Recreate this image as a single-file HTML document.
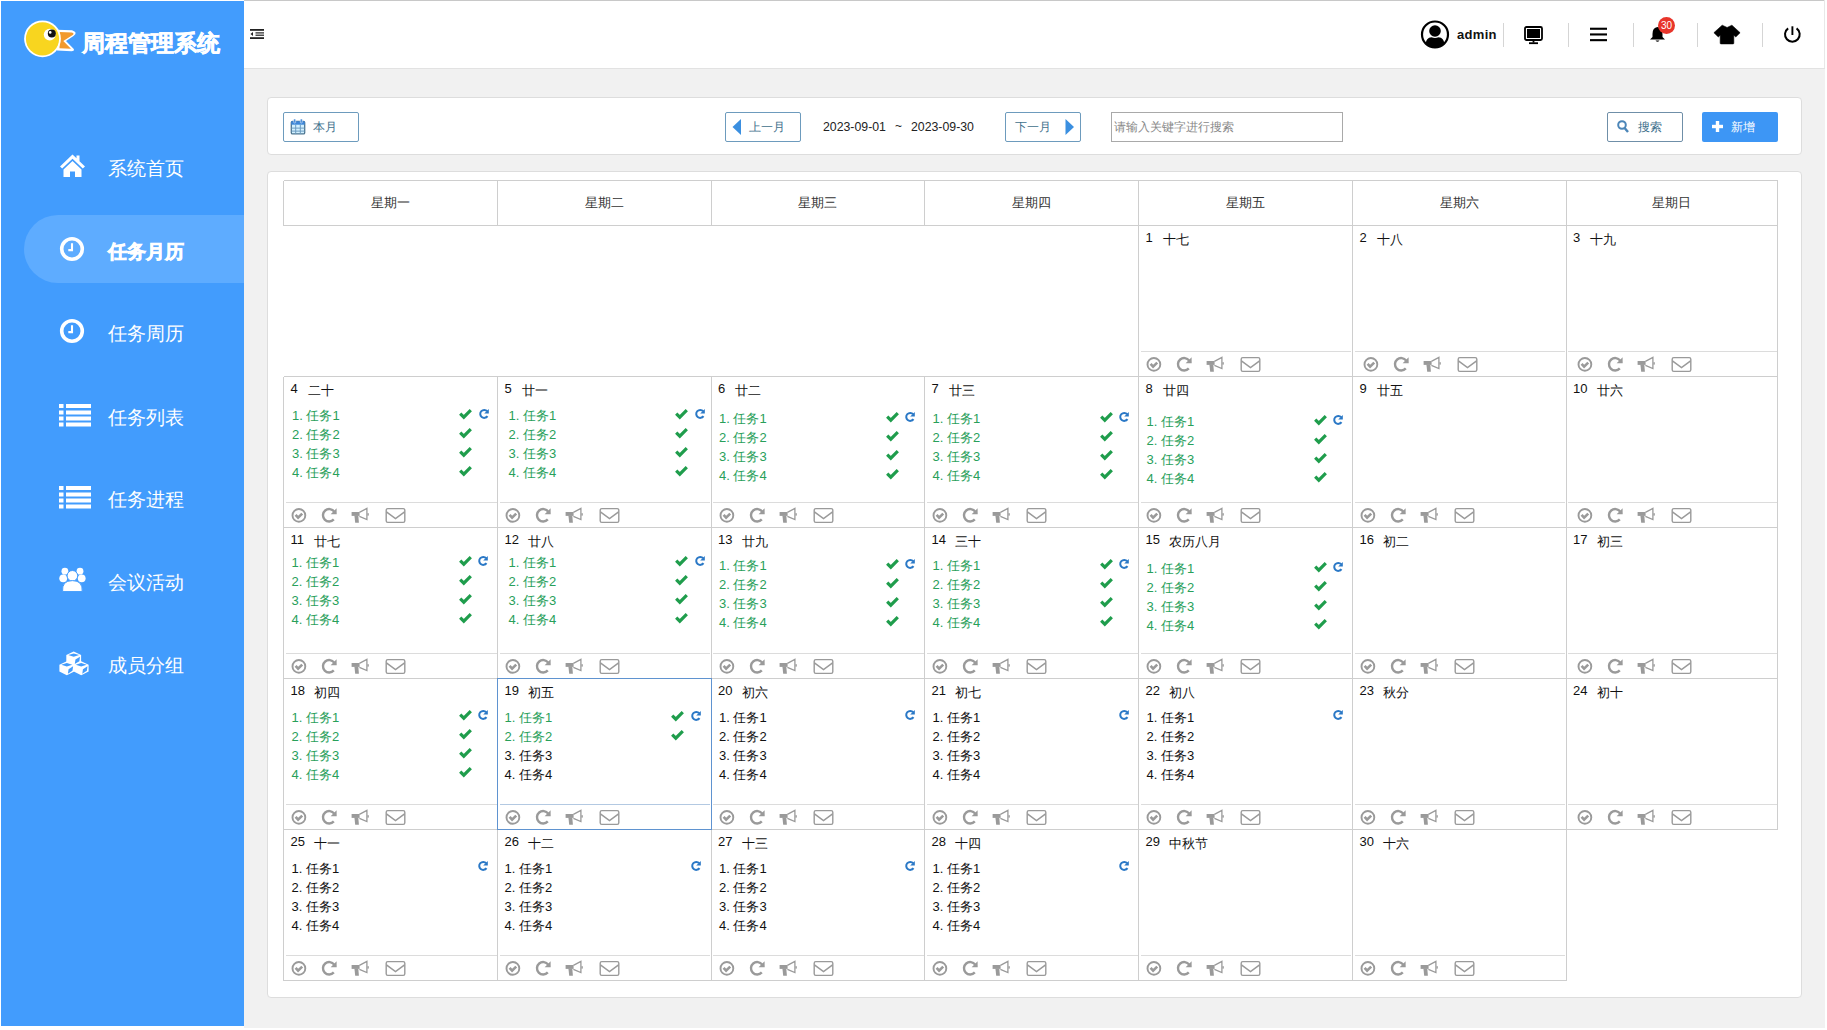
<!DOCTYPE html>
<html><head><meta charset="utf-8"><title>周程管理系统</title><style>
*{box-sizing:border-box;margin:0;padding:0}
html,body{width:1827px;height:1030px;overflow:hidden;background:#fff;font-family:"Liberation Sans", sans-serif}
.a{position:absolute}
.ln{position:absolute}
.t{position:absolute;white-space:nowrap}
svg{position:absolute;overflow:visible}
</style></head>
<body>
<div class="a" style="left:244px;top:0;width:1580px;height:1px;background:#c8c8c8"></div>
<div class="a" style="left:1px;top:1px;width:243px;height:1025px;background:#429cfd"></div>
<div class="a" style="left:244px;top:1px;width:1581px;height:68px;background:#fff;border-bottom:1px solid #e2e2e2"></div>
<div class="a" style="left:1824px;top:0;width:1px;height:68px;background:#e8e8e8"></div>
<div class="a" style="left:244px;top:69px;width:1581px;height:959px;background:#f1f1f1"></div>
<svg style="left:20px;top:16px" width="60" height="46" viewBox="0 0 60 46">
<path d="M37 13.8 L52 14.3 Q58.5 16.5 53.5 20 L46 25 L53.8 33 Q54.5 35.2 51.5 35.2 L37 34.5 Z" fill="#fff"/>
<path d="M39.5 16 L51.8 16.5 Q55 17.6 52.3 19.3 L43.3 25 L51 32.8 L39.5 32.3 Z" fill="#f29a2e"/>
<circle cx="22.5" cy="22.8" r="18.4" fill="#fff"/>
<circle cx="22.5" cy="22.8" r="16.6" fill="#f8d51f"/>
<circle cx="29.7" cy="18.6" r="5.9" fill="#fff"/>
<circle cx="31.8" cy="17.5" r="4" fill="#111"/>
<circle cx="30.2" cy="16.4" r="1.3" fill="#fff"/>
</svg>
<div class="t" style="left:82px;top:28px;font-size:23px;line-height:30px;font-weight:bold;color:#fff;letter-spacing:0px;-webkit-text-stroke:0.6px #fff">周程管理系统</div>
<div class="a" style="left:24px;top:215px;width:220px;height:68px;background:#5eacff;border-radius:34px 0 0 34px"></div>
<div class="t" style="left:108px;top:156.3px;font-size:19px;line-height:26px;color:#fff;font-weight:normal">系统首页</div>
<svg style="left:59px;top:153.3px" width="27" height="25" viewBox="0 0 27 25">
<path d="M13.5 1.5 L1 13.5 L3.2 15.6 L13.5 5.8 L23.8 15.6 L26 13.5 L20.5 8.2 L20.5 2.5 L17.5 2.5 L17.5 5.3 Z" fill="#fff"/>
<path d="M13.5 8 L4.5 16.5 L4.5 24 L11 24 L11 18.5 L16 18.5 L16 24 L22.5 24 L22.5 16.5 Z" fill="#fff"/>
</svg>
<div class="t" style="left:108px;top:239.3px;font-size:19px;line-height:26px;color:#fff;font-weight:bold;-webkit-text-stroke:0.7px #fff">任务月历</div>
<svg style="left:60px;top:237.3px" width="24" height="24" viewBox="0 0 24 24">
<circle cx="12" cy="12" r="10.3" fill="none" stroke="#fff" stroke-width="3.6"/>
<path d="M12 6.3 V13.1 H8.3" fill="none" stroke="#fff" stroke-width="2.1"/>
</svg>
<div class="t" style="left:108px;top:321.3px;font-size:19px;line-height:26px;color:#fff;font-weight:normal">任务周历</div>
<svg style="left:60px;top:319.3px" width="24" height="24" viewBox="0 0 24 24">
<circle cx="12" cy="12" r="10.3" fill="none" stroke="#fff" stroke-width="3.6"/>
<path d="M12 6.3 V13.1 H8.3" fill="none" stroke="#fff" stroke-width="2.1"/>
</svg>
<div class="t" style="left:108px;top:404.5px;font-size:19px;line-height:26px;color:#fff;font-weight:normal">任务列表</div>
<svg style="left:59px;top:402.5px" width="32" height="24" viewBox="0 0 32 24">
<g fill="#fff"><rect x="0" y="1" width="4.5" height="4"/><rect x="0" y="7.5" width="4.5" height="4"/><rect x="0" y="13.5" width="4.5" height="4"/><rect x="0" y="19.5" width="4.5" height="4"/>
<rect x="7" y="1" width="25" height="4"/><rect x="7" y="7.5" width="25" height="4"/><rect x="7" y="13.5" width="25" height="4"/><rect x="7" y="19.5" width="25" height="4"/></g>
</svg>
<div class="t" style="left:108px;top:486.5px;font-size:19px;line-height:26px;color:#fff;font-weight:normal">任务进程</div>
<svg style="left:59px;top:484.5px" width="32" height="24" viewBox="0 0 32 24">
<g fill="#fff"><rect x="0" y="1" width="4.5" height="4"/><rect x="0" y="7.5" width="4.5" height="4"/><rect x="0" y="13.5" width="4.5" height="4"/><rect x="0" y="19.5" width="4.5" height="4"/>
<rect x="7" y="1" width="25" height="4"/><rect x="7" y="7.5" width="25" height="4"/><rect x="7" y="13.5" width="25" height="4"/><rect x="7" y="19.5" width="25" height="4"/></g>
</svg>
<div class="t" style="left:108px;top:569.5px;font-size:19px;line-height:26px;color:#fff;font-weight:normal">会议活动</div>
<svg style="left:0;top:0" width="100" height="700" viewBox="0 0 100 700">
<g fill="#fff"><circle cx="64.9" cy="571.2" r="3.4"/><circle cx="80.0" cy="571.2" r="3.4"/>
<circle cx="63.2" cy="578.3" r="3.9"/><circle cx="81.7" cy="578.3" r="3.9"/></g>
<circle cx="72.4" cy="575.8" r="5.3" fill="#fff" stroke="#429cfd" stroke-width="1"/>
<path d="M62.6 591.6 Q61.6 580.6 72.4 580.6 Q83 580.6 82.2 591.6 Z" fill="#fff" stroke="#429cfd" stroke-width="1"/>
</svg>
<div class="t" style="left:108px;top:653px;font-size:19px;line-height:26px;color:#fff;font-weight:normal">成员分组</div>
<svg style="left:0;top:0" width="100" height="700" viewBox="0 0 100 700"><polygon points="73.70,651.50 81.10,655.10 81.10,661.90 73.70,665.50 66.30,661.90 66.30,655.10" fill="#fff"/><polygon points="73.70,653.40 79.20,655.10 73.70,656.80 68.20,655.10" fill="#429cfd"/><polygon points="75.44,659.45 80.00,656.65 79.36,661.15 74.80,663.95" fill="#429cfd"/><polygon points="66.80,661.20 74.20,664.80 74.20,671.60 66.80,675.20 59.40,671.60 59.40,664.80" fill="#fff"/><polygon points="66.80,663.10 72.30,664.80 66.80,666.50 61.30,664.80" fill="#429cfd"/><polygon points="68.54,669.15 73.10,666.35 72.46,670.85 67.90,673.65" fill="#429cfd"/><polygon points="81.20,661.20 88.60,664.80 88.60,671.60 81.20,675.20 73.80,671.60 73.80,664.80" fill="#fff"/><polygon points="81.20,663.10 86.70,664.80 81.20,666.50 75.70,664.80" fill="#429cfd"/><polygon points="82.94,669.15 87.50,666.35 86.86,670.85 82.30,673.65" fill="#429cfd"/></svg>
<svg style="left:250px;top:29px" width="14" height="10" viewBox="0 0 14 10">
<rect x="0" y="0" width="14" height="1.8" fill="#222"/><rect x="5.5" y="3.3" width="8.5" height="1.2" fill="#222"/><rect x="5.5" y="5.6" width="8.5" height="1.2" fill="#222"/>
<rect x="0" y="8.2" width="14" height="1.8" fill="#222"/><path d="M3 3 L0.5 5 L3 7 Z" fill="#222"/></svg>
<svg style="left:1421px;top:20px" width="28" height="29" viewBox="0 0 28 29">
<circle cx="14" cy="14.5" r="13" fill="none" stroke="#000" stroke-width="2.2"/>
<circle cx="14" cy="11" r="5.8" fill="#000"/>
<path d="M4.6 24 Q5 17.8 10.5 17.3 Q14 18.6 17.5 17.3 Q23 17.8 23.4 24 Q19 27.8 14 27.8 Q9 27.8 4.6 24Z" fill="#000"/>
</svg>
<div class="t" style="left:1457px;top:27px;font-size:13px;line-height:16px;font-weight:bold;color:#111;letter-spacing:0.3px">admin</div>
<div class="a" style="left:1503.0px;top:23px;width:1px;height:24px;background:#d5d5d5"></div>
<div class="a" style="left:1568.0px;top:23px;width:1px;height:24px;background:#d5d5d5"></div>
<div class="a" style="left:1633.0px;top:23px;width:1px;height:24px;background:#d5d5d5"></div>
<div class="a" style="left:1697.0px;top:23px;width:1px;height:24px;background:#d5d5d5"></div>
<div class="a" style="left:1762.0px;top:23px;width:1px;height:24px;background:#d5d5d5"></div>
<svg style="left:1524px;top:26px" width="20" height="19" viewBox="0 0 20 19">
<rect x="1" y="1" width="17" height="13" rx="1.5" fill="none" stroke="#000" stroke-width="1.8"/>
<rect x="3" y="3" width="13" height="9" fill="#000"/><rect x="8.6" y="14" width="1.8" height="2.6" fill="#000"/><rect x="5" y="16.3" width="9" height="1.8" fill="#000"/>
</svg>
<svg style="left:1590px;top:27px" width="17" height="15" viewBox="0 0 17 15">
<rect x="0" y="0.7" width="17" height="2.1" fill="#000"/><rect x="0" y="6.4" width="17" height="2.1" fill="#000"/><rect x="0" y="12.1" width="17" height="2.1" fill="#000"/></svg>
<svg style="left:1649px;top:26px" width="17" height="17" viewBox="0 0 17 17">
<path d="M8.5 1 Q13.5 1.5 13.5 8 L13.5 11 L16 13.5 L1 13.5 L3.5 11 L3.5 8 Q3.5 1.5 8.5 1Z" fill="#000"/>
<path d="M6.5 14.5 Q8.5 17 10.5 14.5Z" fill="#000"/></svg>
<div class="a" style="left:1658px;top:17px;width:17px;height:17px;border-radius:50%;background:#e8352b"></div>
<div class="t" style="left:1658px;top:19px;width:17px;text-align:center;font-size:10px;line-height:13px;color:#fff">30</div>
<svg style="left:1714px;top:25px" width="27" height="20" viewBox="0 0 27 20">
<path d="M8.2 0.2 L13.1 2.5 L17.9 0.2 L26.1 7.7 L21.8 11.9 L19.8 10.2 L19.8 18.2 Q19.8 18.9 19 18.9 L7 18.9 Q6.2 18.9 6.2 18.2 L6.2 10.2 L4.3 11.9 L-0.1 7.7 Z" fill="#000" stroke="#000" stroke-width="0.6" stroke-linejoin="round"/></svg>
<svg style="left:1783px;top:25px" width="19" height="19" viewBox="0 0 19 19">
<path d="M13.57 3.33 A7.35 7.35 0 1 1 5.13 3.33" fill="none" stroke="#000" stroke-width="2"/>
<rect x="8.45" y="1.3" width="1.9" height="8.7" fill="#000"/></svg>
<div class="a" style="left:267px;top:97px;width:1535px;height:58px;background:#fff;border:1px solid #dddddd;border-radius:4px"></div>
<div class="a" style="left:283px;top:112px;width:76px;height:30px;border:1px solid #6d9bbd;background:#fff;border-radius:2px"></div>
<svg style="left:290px;top:118px" width="16" height="17" viewBox="0 0 16 17">
<rect x="1.3" y="3.3" width="13.4" height="12.6" rx="1.2" fill="#d2f0ff" stroke="#4d7590" stroke-width="1.3"/>
<rect x="1.3" y="3.3" width="13.4" height="3.4" fill="#3d86d8"/>
<g fill="#6c9cc0"><rect x="5.2" y="6.7" width="1" height="9"/><rect x="9.8" y="6.7" width="1" height="9"/><rect x="1.5" y="9.6" width="13" height="1"/><rect x="1.5" y="12.6" width="13" height="1"/></g>
<rect x="3.7" y="1" width="2" height="4" rx="0.8" fill="#3d86d8" stroke="#fff" stroke-width="0.5"/><rect x="10.3" y="1" width="2" height="4" rx="0.8" fill="#3d86d8" stroke="#fff" stroke-width="0.5"/></svg>
<div class="t" style="left:313px;top:120px;font-size:12px;line-height:15px;color:#40708c">本月</div>
<div class="a" style="left:725px;top:112px;width:76px;height:30px;border:1px solid #6d9bbd;background:#fff;border-radius:2px"></div>
<svg style="left:732px;top:119px" width="10" height="16" viewBox="0 0 10 16"><path d="M9 0 L0.5 8 L9 16Z" fill="#3b8fe0"/></svg>
<div class="t" style="left:749px;top:120px;font-size:12px;line-height:15px;color:#40708c">上一月</div>
<div class="t" style="left:823px;top:120px;font-size:12.3px;line-height:15px;color:#222">2023-09-01</div>
<div class="t" style="left:895px;top:119px;font-size:12px;line-height:15px;color:#222">~</div>
<div class="t" style="left:911px;top:120px;font-size:12.3px;line-height:15px;color:#222">2023-09-30</div>
<div class="a" style="left:1005px;top:112px;width:76px;height:30px;border:1px solid #6d9bbd;background:#fff;border-radius:2px"></div>
<div class="t" style="left:1015px;top:120px;font-size:12px;line-height:15px;color:#40708c">下一月</div>
<svg style="left:1065px;top:119px" width="10" height="16" viewBox="0 0 10 16"><path d="M0.5 0 L9 8 L0.5 16Z" fill="#3b8fe0"/></svg>
<div class="a" style="left:1111px;top:112px;width:232px;height:30px;border:1px solid #a9a9a9;background:#fff"></div>
<div class="t" style="left:1114px;top:120px;font-size:12px;line-height:15px;color:#888">请输入关键字进行搜索</div>
<div class="a" style="left:1607px;top:112px;width:76px;height:30px;border:1px solid #6f8fa8;background:#fff;border-radius:2px"></div>
<svg style="left:1617px;top:120px" width="12" height="13" viewBox="0 0 12 13">
<circle cx="5" cy="5" r="3.8" fill="none" stroke="#4c86b8" stroke-width="2"/><path d="M7.6 8 L11 12" stroke="#4c86b8" stroke-width="2.4"/></svg>
<div class="t" style="left:1638px;top:120px;font-size:12px;line-height:15px;color:#40708c">搜索</div>
<div class="a" style="left:1702px;top:112px;width:76px;height:30px;background:#3d96f5;border-radius:2px"></div>
<svg style="left:1712px;top:121px" width="11" height="11" viewBox="0 0 11 11"><rect x="3.8" y="0" width="3.4" height="11" fill="#fff"/><rect x="0" y="3.8" width="11" height="3.4" fill="#fff"/></svg>
<div class="t" style="left:1731px;top:120px;font-size:12px;line-height:15px;color:#fff">新增</div>
<div class="a" style="left:267px;top:170.5px;width:1535px;height:827.5px;background:#fff;border:1px solid #dddddd;border-radius:4px"></div>
<div class="ln" style="left:283.5px;top:180.0px;width:1494.0px;height:1px;background:#cecece"></div>
<div class="ln" style="left:283.5px;top:225.0px;width:1494.0px;height:1px;background:#cecece"></div>
<div class="ln" style="left:283.0px;top:180.5px;width:1px;height:45.0px;background:#cecece"></div>
<div class="ln" style="left:497.0px;top:180.5px;width:1px;height:45.0px;background:#cecece"></div>
<div class="ln" style="left:710.5px;top:180.5px;width:1px;height:45.0px;background:#cecece"></div>
<div class="ln" style="left:924.0px;top:180.5px;width:1px;height:45.0px;background:#cecece"></div>
<div class="ln" style="left:1138.1px;top:180.5px;width:1px;height:45.0px;background:#cecece"></div>
<div class="ln" style="left:1352.0px;top:180.5px;width:1px;height:45.0px;background:#cecece"></div>
<div class="ln" style="left:1565.5px;top:180.5px;width:1px;height:45.0px;background:#cecece"></div>
<div class="ln" style="left:1777.0px;top:180.5px;width:1px;height:45.0px;background:#cecece"></div>
<div class="t" style="left:283.5px;top:195px;width:214.0px;text-align:center;font-size:13px;line-height:16px;color:#333">星期一</div>
<div class="t" style="left:497.5px;top:195px;width:213.5px;text-align:center;font-size:13px;line-height:16px;color:#333">星期二</div>
<div class="t" style="left:711.0px;top:195px;width:213.5px;text-align:center;font-size:13px;line-height:16px;color:#333">星期三</div>
<div class="t" style="left:924.5px;top:195px;width:214.1px;text-align:center;font-size:13px;line-height:16px;color:#333">星期四</div>
<div class="t" style="left:1138.6px;top:195px;width:213.9px;text-align:center;font-size:13px;line-height:16px;color:#333">星期五</div>
<div class="t" style="left:1352.5px;top:195px;width:213.5px;text-align:center;font-size:13px;line-height:16px;color:#333">星期六</div>
<div class="t" style="left:1566.0px;top:195px;width:211.5px;text-align:center;font-size:13px;line-height:16px;color:#333">星期日</div>
<div class="ln" style="left:1138.1px;top:225.5px;width:1px;height:151.0px;background:#cecece"></div>
<div class="ln" style="left:1352.0px;top:225.5px;width:1px;height:151.0px;background:#cecece"></div>
<div class="ln" style="left:1565.5px;top:225.5px;width:1px;height:151.0px;background:#cecece"></div>
<div class="ln" style="left:1777.0px;top:225.5px;width:1px;height:151.0px;background:#cecece"></div>
<div class="ln" style="left:283.0px;top:376.5px;width:1px;height:151.0px;background:#cecece"></div>
<div class="ln" style="left:497.0px;top:376.5px;width:1px;height:151.0px;background:#cecece"></div>
<div class="ln" style="left:710.5px;top:376.5px;width:1px;height:151.0px;background:#cecece"></div>
<div class="ln" style="left:924.0px;top:376.5px;width:1px;height:151.0px;background:#cecece"></div>
<div class="ln" style="left:1138.1px;top:376.5px;width:1px;height:151.0px;background:#cecece"></div>
<div class="ln" style="left:1352.0px;top:376.5px;width:1px;height:151.0px;background:#cecece"></div>
<div class="ln" style="left:1565.5px;top:376.5px;width:1px;height:151.0px;background:#cecece"></div>
<div class="ln" style="left:1777.0px;top:376.5px;width:1px;height:151.0px;background:#cecece"></div>
<div class="ln" style="left:283.0px;top:527.5px;width:1px;height:151.0px;background:#cecece"></div>
<div class="ln" style="left:497.0px;top:527.5px;width:1px;height:151.0px;background:#cecece"></div>
<div class="ln" style="left:710.5px;top:527.5px;width:1px;height:151.0px;background:#cecece"></div>
<div class="ln" style="left:924.0px;top:527.5px;width:1px;height:151.0px;background:#cecece"></div>
<div class="ln" style="left:1138.1px;top:527.5px;width:1px;height:151.0px;background:#cecece"></div>
<div class="ln" style="left:1352.0px;top:527.5px;width:1px;height:151.0px;background:#cecece"></div>
<div class="ln" style="left:1565.5px;top:527.5px;width:1px;height:151.0px;background:#cecece"></div>
<div class="ln" style="left:1777.0px;top:527.5px;width:1px;height:151.0px;background:#cecece"></div>
<div class="ln" style="left:283.0px;top:678.5px;width:1px;height:151.0px;background:#cecece"></div>
<div class="ln" style="left:497.0px;top:678.5px;width:1px;height:151.0px;background:#cecece"></div>
<div class="ln" style="left:710.5px;top:678.5px;width:1px;height:151.0px;background:#cecece"></div>
<div class="ln" style="left:924.0px;top:678.5px;width:1px;height:151.0px;background:#cecece"></div>
<div class="ln" style="left:1138.1px;top:678.5px;width:1px;height:151.0px;background:#cecece"></div>
<div class="ln" style="left:1352.0px;top:678.5px;width:1px;height:151.0px;background:#cecece"></div>
<div class="ln" style="left:1565.5px;top:678.5px;width:1px;height:151.0px;background:#cecece"></div>
<div class="ln" style="left:1777.0px;top:678.5px;width:1px;height:151.0px;background:#cecece"></div>
<div class="ln" style="left:283.0px;top:829.5px;width:1px;height:151.0px;background:#cecece"></div>
<div class="ln" style="left:497.0px;top:829.5px;width:1px;height:151.0px;background:#cecece"></div>
<div class="ln" style="left:710.5px;top:829.5px;width:1px;height:151.0px;background:#cecece"></div>
<div class="ln" style="left:924.0px;top:829.5px;width:1px;height:151.0px;background:#cecece"></div>
<div class="ln" style="left:1138.1px;top:829.5px;width:1px;height:151.0px;background:#cecece"></div>
<div class="ln" style="left:1352.0px;top:829.5px;width:1px;height:151.0px;background:#cecece"></div>
<div class="ln" style="left:1565.5px;top:829.5px;width:1px;height:151.0px;background:#cecece"></div>
<div class="ln" style="left:283.5px;top:376.0px;width:1494.0px;height:1px;background:#cecece"></div>
<div class="ln" style="left:283.5px;top:527.0px;width:1494.0px;height:1px;background:#cecece"></div>
<div class="ln" style="left:283.5px;top:678.0px;width:1494.0px;height:1px;background:#cecece"></div>
<div class="ln" style="left:283.5px;top:829.0px;width:1494.0px;height:1px;background:#cecece"></div>
<div class="ln" style="left:283.5px;top:980.0px;width:1282.5px;height:1px;background:#cecece"></div>
<div class="t" style="left:1145.6px;top:229.5px;font-size:13px;line-height:16px;color:#111">1</div>
<div class="t" style="left:1162.6px;top:231.5px;font-size:13px;line-height:16px;color:#111">十七</div>
<div class="ln" style="left:1140.6px;top:351.0px;width:210.9px;height:1px;background:#dcdcdc"></div>
<svg style="left:1147.1px;top:357.0px" width="116" height="16" viewBox="0 0 116 16">
<g fill="none" stroke="#9a9a9a">
<circle cx="6.9" cy="7.4" r="6.4" stroke-width="1.9"/>
<path d="M3.6 6.9 L6.1 9.7 L10.2 5.6" stroke-width="2.6"/>
<path d="M41.8 11.4 A6.2 6.2 0 1 1 42.2 3.6" stroke-width="2.4"/>
<rect x="94.2" y="0.6" width="18.6" height="13.8" rx="1.6" stroke-width="1.4"/>
<path d="M94.4 3.8 L103.5 10.6 L112.6 3.8" stroke-width="1.5"/>
</g>
<path d="M44.6 0.2 L44.7 6.2 L38.6 6.2 Z" fill="#9a9a9a"/>
<g fill="#9a9a9a"><path d="M59.6 4 L67.6 4 L67.6 7.9 L59.6 7.9 Z"/><path d="M62.4 7.5 L66.3 7.5 L66.9 14.7 L63.2 14.7 Z"/></g>
<path d="M67.4 4.4 L74.9 0.4 L74.9 11.6 L67.4 8.3" fill="#9a9a9a" fill-opacity="0" stroke="#9a9a9a" stroke-width="1.3"/>
<rect x="75.4" y="5.2" width="1.4" height="2.4" fill="#9a9a9a"/>
</svg>
<div class="t" style="left:1359.5px;top:229.5px;font-size:13px;line-height:16px;color:#111">2</div>
<div class="t" style="left:1376.5px;top:231.5px;font-size:13px;line-height:16px;color:#111">十八</div>
<div class="ln" style="left:1354.5px;top:351.0px;width:210.5px;height:1px;background:#dcdcdc"></div>
<svg style="left:1364.4px;top:357.0px" width="116" height="16" viewBox="0 0 116 16">
<g fill="none" stroke="#9a9a9a">
<circle cx="6.9" cy="7.4" r="6.4" stroke-width="1.9"/>
<path d="M3.6 6.9 L6.1 9.7 L10.2 5.6" stroke-width="2.6"/>
<path d="M41.8 11.4 A6.2 6.2 0 1 1 42.2 3.6" stroke-width="2.4"/>
<rect x="94.2" y="0.6" width="18.6" height="13.8" rx="1.6" stroke-width="1.4"/>
<path d="M94.4 3.8 L103.5 10.6 L112.6 3.8" stroke-width="1.5"/>
</g>
<path d="M44.6 0.2 L44.7 6.2 L38.6 6.2 Z" fill="#9a9a9a"/>
<g fill="#9a9a9a"><path d="M59.6 4 L67.6 4 L67.6 7.9 L59.6 7.9 Z"/><path d="M62.4 7.5 L66.3 7.5 L66.9 14.7 L63.2 14.7 Z"/></g>
<path d="M67.4 4.4 L74.9 0.4 L74.9 11.6 L67.4 8.3" fill="#9a9a9a" fill-opacity="0" stroke="#9a9a9a" stroke-width="1.3"/>
<rect x="75.4" y="5.2" width="1.4" height="2.4" fill="#9a9a9a"/>
</svg>
<div class="t" style="left:1573.0px;top:229.5px;font-size:13px;line-height:16px;color:#111">3</div>
<div class="t" style="left:1590.0px;top:231.5px;font-size:13px;line-height:16px;color:#111">十九</div>
<div class="ln" style="left:1568.0px;top:351.0px;width:208.5px;height:1px;background:#dcdcdc"></div>
<svg style="left:1577.9px;top:357.0px" width="116" height="16" viewBox="0 0 116 16">
<g fill="none" stroke="#9a9a9a">
<circle cx="6.9" cy="7.4" r="6.4" stroke-width="1.9"/>
<path d="M3.6 6.9 L6.1 9.7 L10.2 5.6" stroke-width="2.6"/>
<path d="M41.8 11.4 A6.2 6.2 0 1 1 42.2 3.6" stroke-width="2.4"/>
<rect x="94.2" y="0.6" width="18.6" height="13.8" rx="1.6" stroke-width="1.4"/>
<path d="M94.4 3.8 L103.5 10.6 L112.6 3.8" stroke-width="1.5"/>
</g>
<path d="M44.6 0.2 L44.7 6.2 L38.6 6.2 Z" fill="#9a9a9a"/>
<g fill="#9a9a9a"><path d="M59.6 4 L67.6 4 L67.6 7.9 L59.6 7.9 Z"/><path d="M62.4 7.5 L66.3 7.5 L66.9 14.7 L63.2 14.7 Z"/></g>
<path d="M67.4 4.4 L74.9 0.4 L74.9 11.6 L67.4 8.3" fill="#9a9a9a" fill-opacity="0" stroke="#9a9a9a" stroke-width="1.3"/>
<rect x="75.4" y="5.2" width="1.4" height="2.4" fill="#9a9a9a"/>
</svg>
<div class="t" style="left:290.5px;top:380.5px;font-size:13px;line-height:16px;color:#111">4</div>
<div class="t" style="left:307.5px;top:382.5px;font-size:13px;line-height:16px;color:#111">二十</div>
<div class="t" style="left:292.0px;top:408.0px;font-size:13px;line-height:16px;color:#28a05a">1.&nbsp;任务1</div>
<svg style="left:459.0px;top:408.5px" width="13" height="10" viewBox="0 0 13 10"><path d="M1.2 4.6 L4.8 8.2 L11.8 1.2" fill="none" stroke="#1f9d4c" stroke-width="3.2"/></svg>
<svg style="left:478.5px;top:408.5px" width="10" height="10" viewBox="0 0 10 10"><path d="M8.2 2.2 A4 4 0 1 0 8.5 7.2" fill="none" stroke="#2a78c6" stroke-width="2"/><path d="M9.8 0 L9.8 4.6 L5.2 4.6Z" fill="#2a78c6"/></svg>
<div class="t" style="left:292.0px;top:427.0px;font-size:13px;line-height:16px;color:#28a05a">2.&nbsp;任务2</div>
<svg style="left:459.0px;top:427.5px" width="13" height="10" viewBox="0 0 13 10"><path d="M1.2 4.6 L4.8 8.2 L11.8 1.2" fill="none" stroke="#1f9d4c" stroke-width="3.2"/></svg>
<div class="t" style="left:292.0px;top:446.0px;font-size:13px;line-height:16px;color:#28a05a">3.&nbsp;任务3</div>
<svg style="left:459.0px;top:446.5px" width="13" height="10" viewBox="0 0 13 10"><path d="M1.2 4.6 L4.8 8.2 L11.8 1.2" fill="none" stroke="#1f9d4c" stroke-width="3.2"/></svg>
<div class="t" style="left:292.0px;top:465.0px;font-size:13px;line-height:16px;color:#28a05a">4.&nbsp;任务4</div>
<svg style="left:459.0px;top:465.5px" width="13" height="10" viewBox="0 0 13 10"><path d="M1.2 4.6 L4.8 8.2 L11.8 1.2" fill="none" stroke="#1f9d4c" stroke-width="3.2"/></svg>
<div class="ln" style="left:285.5px;top:502.0px;width:211.0px;height:1px;background:#dcdcdc"></div>
<svg style="left:292.0px;top:508.0px" width="116" height="16" viewBox="0 0 116 16">
<g fill="none" stroke="#9a9a9a">
<circle cx="6.9" cy="7.4" r="6.4" stroke-width="1.9"/>
<path d="M3.6 6.9 L6.1 9.7 L10.2 5.6" stroke-width="2.6"/>
<path d="M41.8 11.4 A6.2 6.2 0 1 1 42.2 3.6" stroke-width="2.4"/>
<rect x="94.2" y="0.6" width="18.6" height="13.8" rx="1.6" stroke-width="1.4"/>
<path d="M94.4 3.8 L103.5 10.6 L112.6 3.8" stroke-width="1.5"/>
</g>
<path d="M44.6 0.2 L44.7 6.2 L38.6 6.2 Z" fill="#9a9a9a"/>
<g fill="#9a9a9a"><path d="M59.6 4 L67.6 4 L67.6 7.9 L59.6 7.9 Z"/><path d="M62.4 7.5 L66.3 7.5 L66.9 14.7 L63.2 14.7 Z"/></g>
<path d="M67.4 4.4 L74.9 0.4 L74.9 11.6 L67.4 8.3" fill="#9a9a9a" fill-opacity="0" stroke="#9a9a9a" stroke-width="1.3"/>
<rect x="75.4" y="5.2" width="1.4" height="2.4" fill="#9a9a9a"/>
</svg>
<div class="t" style="left:504.5px;top:380.5px;font-size:13px;line-height:16px;color:#111">5</div>
<div class="t" style="left:521.5px;top:382.5px;font-size:13px;line-height:16px;color:#111">廿一</div>
<div class="t" style="left:508.5px;top:408.0px;font-size:13px;line-height:16px;color:#28a05a">1.&nbsp;任务1</div>
<svg style="left:675.0px;top:408.5px" width="13" height="10" viewBox="0 0 13 10"><path d="M1.2 4.6 L4.8 8.2 L11.8 1.2" fill="none" stroke="#1f9d4c" stroke-width="3.2"/></svg>
<svg style="left:694.5px;top:408.5px" width="10" height="10" viewBox="0 0 10 10"><path d="M8.2 2.2 A4 4 0 1 0 8.5 7.2" fill="none" stroke="#2a78c6" stroke-width="2"/><path d="M9.8 0 L9.8 4.6 L5.2 4.6Z" fill="#2a78c6"/></svg>
<div class="t" style="left:508.5px;top:427.0px;font-size:13px;line-height:16px;color:#28a05a">2.&nbsp;任务2</div>
<svg style="left:675.0px;top:427.5px" width="13" height="10" viewBox="0 0 13 10"><path d="M1.2 4.6 L4.8 8.2 L11.8 1.2" fill="none" stroke="#1f9d4c" stroke-width="3.2"/></svg>
<div class="t" style="left:508.5px;top:446.0px;font-size:13px;line-height:16px;color:#28a05a">3.&nbsp;任务3</div>
<svg style="left:675.0px;top:446.5px" width="13" height="10" viewBox="0 0 13 10"><path d="M1.2 4.6 L4.8 8.2 L11.8 1.2" fill="none" stroke="#1f9d4c" stroke-width="3.2"/></svg>
<div class="t" style="left:508.5px;top:465.0px;font-size:13px;line-height:16px;color:#28a05a">4.&nbsp;任务4</div>
<svg style="left:675.0px;top:465.5px" width="13" height="10" viewBox="0 0 13 10"><path d="M1.2 4.6 L4.8 8.2 L11.8 1.2" fill="none" stroke="#1f9d4c" stroke-width="3.2"/></svg>
<div class="ln" style="left:499.5px;top:502.0px;width:210.5px;height:1px;background:#dcdcdc"></div>
<svg style="left:506.0px;top:508.0px" width="116" height="16" viewBox="0 0 116 16">
<g fill="none" stroke="#9a9a9a">
<circle cx="6.9" cy="7.4" r="6.4" stroke-width="1.9"/>
<path d="M3.6 6.9 L6.1 9.7 L10.2 5.6" stroke-width="2.6"/>
<path d="M41.8 11.4 A6.2 6.2 0 1 1 42.2 3.6" stroke-width="2.4"/>
<rect x="94.2" y="0.6" width="18.6" height="13.8" rx="1.6" stroke-width="1.4"/>
<path d="M94.4 3.8 L103.5 10.6 L112.6 3.8" stroke-width="1.5"/>
</g>
<path d="M44.6 0.2 L44.7 6.2 L38.6 6.2 Z" fill="#9a9a9a"/>
<g fill="#9a9a9a"><path d="M59.6 4 L67.6 4 L67.6 7.9 L59.6 7.9 Z"/><path d="M62.4 7.5 L66.3 7.5 L66.9 14.7 L63.2 14.7 Z"/></g>
<path d="M67.4 4.4 L74.9 0.4 L74.9 11.6 L67.4 8.3" fill="#9a9a9a" fill-opacity="0" stroke="#9a9a9a" stroke-width="1.3"/>
<rect x="75.4" y="5.2" width="1.4" height="2.4" fill="#9a9a9a"/>
</svg>
<div class="t" style="left:718.0px;top:380.5px;font-size:13px;line-height:16px;color:#111">6</div>
<div class="t" style="left:735.0px;top:382.5px;font-size:13px;line-height:16px;color:#111">廿二</div>
<div class="t" style="left:719.0px;top:411.3px;font-size:13px;line-height:16px;color:#28a05a">1.&nbsp;任务1</div>
<svg style="left:885.5px;top:411.8px" width="13" height="10" viewBox="0 0 13 10"><path d="M1.2 4.6 L4.8 8.2 L11.8 1.2" fill="none" stroke="#1f9d4c" stroke-width="3.2"/></svg>
<svg style="left:905.0px;top:411.8px" width="10" height="10" viewBox="0 0 10 10"><path d="M8.2 2.2 A4 4 0 1 0 8.5 7.2" fill="none" stroke="#2a78c6" stroke-width="2"/><path d="M9.8 0 L9.8 4.6 L5.2 4.6Z" fill="#2a78c6"/></svg>
<div class="t" style="left:719.0px;top:430.3px;font-size:13px;line-height:16px;color:#28a05a">2.&nbsp;任务2</div>
<svg style="left:885.5px;top:430.8px" width="13" height="10" viewBox="0 0 13 10"><path d="M1.2 4.6 L4.8 8.2 L11.8 1.2" fill="none" stroke="#1f9d4c" stroke-width="3.2"/></svg>
<div class="t" style="left:719.0px;top:449.3px;font-size:13px;line-height:16px;color:#28a05a">3.&nbsp;任务3</div>
<svg style="left:885.5px;top:449.8px" width="13" height="10" viewBox="0 0 13 10"><path d="M1.2 4.6 L4.8 8.2 L11.8 1.2" fill="none" stroke="#1f9d4c" stroke-width="3.2"/></svg>
<div class="t" style="left:719.0px;top:468.3px;font-size:13px;line-height:16px;color:#28a05a">4.&nbsp;任务4</div>
<svg style="left:885.5px;top:468.8px" width="13" height="10" viewBox="0 0 13 10"><path d="M1.2 4.6 L4.8 8.2 L11.8 1.2" fill="none" stroke="#1f9d4c" stroke-width="3.2"/></svg>
<div class="ln" style="left:713.0px;top:502.0px;width:210.5px;height:1px;background:#dcdcdc"></div>
<svg style="left:719.5px;top:508.0px" width="116" height="16" viewBox="0 0 116 16">
<g fill="none" stroke="#9a9a9a">
<circle cx="6.9" cy="7.4" r="6.4" stroke-width="1.9"/>
<path d="M3.6 6.9 L6.1 9.7 L10.2 5.6" stroke-width="2.6"/>
<path d="M41.8 11.4 A6.2 6.2 0 1 1 42.2 3.6" stroke-width="2.4"/>
<rect x="94.2" y="0.6" width="18.6" height="13.8" rx="1.6" stroke-width="1.4"/>
<path d="M94.4 3.8 L103.5 10.6 L112.6 3.8" stroke-width="1.5"/>
</g>
<path d="M44.6 0.2 L44.7 6.2 L38.6 6.2 Z" fill="#9a9a9a"/>
<g fill="#9a9a9a"><path d="M59.6 4 L67.6 4 L67.6 7.9 L59.6 7.9 Z"/><path d="M62.4 7.5 L66.3 7.5 L66.9 14.7 L63.2 14.7 Z"/></g>
<path d="M67.4 4.4 L74.9 0.4 L74.9 11.6 L67.4 8.3" fill="#9a9a9a" fill-opacity="0" stroke="#9a9a9a" stroke-width="1.3"/>
<rect x="75.4" y="5.2" width="1.4" height="2.4" fill="#9a9a9a"/>
</svg>
<div class="t" style="left:931.5px;top:380.5px;font-size:13px;line-height:16px;color:#111">7</div>
<div class="t" style="left:948.5px;top:382.5px;font-size:13px;line-height:16px;color:#111">廿三</div>
<div class="t" style="left:932.5px;top:411.3px;font-size:13px;line-height:16px;color:#28a05a">1.&nbsp;任务1</div>
<svg style="left:1099.6px;top:411.8px" width="13" height="10" viewBox="0 0 13 10"><path d="M1.2 4.6 L4.8 8.2 L11.8 1.2" fill="none" stroke="#1f9d4c" stroke-width="3.2"/></svg>
<svg style="left:1119.1px;top:411.8px" width="10" height="10" viewBox="0 0 10 10"><path d="M8.2 2.2 A4 4 0 1 0 8.5 7.2" fill="none" stroke="#2a78c6" stroke-width="2"/><path d="M9.8 0 L9.8 4.6 L5.2 4.6Z" fill="#2a78c6"/></svg>
<div class="t" style="left:932.5px;top:430.3px;font-size:13px;line-height:16px;color:#28a05a">2.&nbsp;任务2</div>
<svg style="left:1099.6px;top:430.8px" width="13" height="10" viewBox="0 0 13 10"><path d="M1.2 4.6 L4.8 8.2 L11.8 1.2" fill="none" stroke="#1f9d4c" stroke-width="3.2"/></svg>
<div class="t" style="left:932.5px;top:449.3px;font-size:13px;line-height:16px;color:#28a05a">3.&nbsp;任务3</div>
<svg style="left:1099.6px;top:449.8px" width="13" height="10" viewBox="0 0 13 10"><path d="M1.2 4.6 L4.8 8.2 L11.8 1.2" fill="none" stroke="#1f9d4c" stroke-width="3.2"/></svg>
<div class="t" style="left:932.5px;top:468.3px;font-size:13px;line-height:16px;color:#28a05a">4.&nbsp;任务4</div>
<svg style="left:1099.6px;top:468.8px" width="13" height="10" viewBox="0 0 13 10"><path d="M1.2 4.6 L4.8 8.2 L11.8 1.2" fill="none" stroke="#1f9d4c" stroke-width="3.2"/></svg>
<div class="ln" style="left:926.5px;top:502.0px;width:211.1px;height:1px;background:#dcdcdc"></div>
<svg style="left:933.0px;top:508.0px" width="116" height="16" viewBox="0 0 116 16">
<g fill="none" stroke="#9a9a9a">
<circle cx="6.9" cy="7.4" r="6.4" stroke-width="1.9"/>
<path d="M3.6 6.9 L6.1 9.7 L10.2 5.6" stroke-width="2.6"/>
<path d="M41.8 11.4 A6.2 6.2 0 1 1 42.2 3.6" stroke-width="2.4"/>
<rect x="94.2" y="0.6" width="18.6" height="13.8" rx="1.6" stroke-width="1.4"/>
<path d="M94.4 3.8 L103.5 10.6 L112.6 3.8" stroke-width="1.5"/>
</g>
<path d="M44.6 0.2 L44.7 6.2 L38.6 6.2 Z" fill="#9a9a9a"/>
<g fill="#9a9a9a"><path d="M59.6 4 L67.6 4 L67.6 7.9 L59.6 7.9 Z"/><path d="M62.4 7.5 L66.3 7.5 L66.9 14.7 L63.2 14.7 Z"/></g>
<path d="M67.4 4.4 L74.9 0.4 L74.9 11.6 L67.4 8.3" fill="#9a9a9a" fill-opacity="0" stroke="#9a9a9a" stroke-width="1.3"/>
<rect x="75.4" y="5.2" width="1.4" height="2.4" fill="#9a9a9a"/>
</svg>
<div class="t" style="left:1145.6px;top:380.5px;font-size:13px;line-height:16px;color:#111">8</div>
<div class="t" style="left:1162.6px;top:382.5px;font-size:13px;line-height:16px;color:#111">廿四</div>
<div class="t" style="left:1146.6px;top:414.1px;font-size:13px;line-height:16px;color:#28a05a">1.&nbsp;任务1</div>
<svg style="left:1313.5px;top:414.6px" width="13" height="10" viewBox="0 0 13 10"><path d="M1.2 4.6 L4.8 8.2 L11.8 1.2" fill="none" stroke="#1f9d4c" stroke-width="3.2"/></svg>
<svg style="left:1333.0px;top:414.6px" width="10" height="10" viewBox="0 0 10 10"><path d="M8.2 2.2 A4 4 0 1 0 8.5 7.2" fill="none" stroke="#2a78c6" stroke-width="2"/><path d="M9.8 0 L9.8 4.6 L5.2 4.6Z" fill="#2a78c6"/></svg>
<div class="t" style="left:1146.6px;top:433.1px;font-size:13px;line-height:16px;color:#28a05a">2.&nbsp;任务2</div>
<svg style="left:1313.5px;top:433.6px" width="13" height="10" viewBox="0 0 13 10"><path d="M1.2 4.6 L4.8 8.2 L11.8 1.2" fill="none" stroke="#1f9d4c" stroke-width="3.2"/></svg>
<div class="t" style="left:1146.6px;top:452.1px;font-size:13px;line-height:16px;color:#28a05a">3.&nbsp;任务3</div>
<svg style="left:1313.5px;top:452.6px" width="13" height="10" viewBox="0 0 13 10"><path d="M1.2 4.6 L4.8 8.2 L11.8 1.2" fill="none" stroke="#1f9d4c" stroke-width="3.2"/></svg>
<div class="t" style="left:1146.6px;top:471.1px;font-size:13px;line-height:16px;color:#28a05a">4.&nbsp;任务4</div>
<svg style="left:1313.5px;top:471.6px" width="13" height="10" viewBox="0 0 13 10"><path d="M1.2 4.6 L4.8 8.2 L11.8 1.2" fill="none" stroke="#1f9d4c" stroke-width="3.2"/></svg>
<div class="ln" style="left:1140.6px;top:502.0px;width:210.9px;height:1px;background:#dcdcdc"></div>
<svg style="left:1147.1px;top:508.0px" width="116" height="16" viewBox="0 0 116 16">
<g fill="none" stroke="#9a9a9a">
<circle cx="6.9" cy="7.4" r="6.4" stroke-width="1.9"/>
<path d="M3.6 6.9 L6.1 9.7 L10.2 5.6" stroke-width="2.6"/>
<path d="M41.8 11.4 A6.2 6.2 0 1 1 42.2 3.6" stroke-width="2.4"/>
<rect x="94.2" y="0.6" width="18.6" height="13.8" rx="1.6" stroke-width="1.4"/>
<path d="M94.4 3.8 L103.5 10.6 L112.6 3.8" stroke-width="1.5"/>
</g>
<path d="M44.6 0.2 L44.7 6.2 L38.6 6.2 Z" fill="#9a9a9a"/>
<g fill="#9a9a9a"><path d="M59.6 4 L67.6 4 L67.6 7.9 L59.6 7.9 Z"/><path d="M62.4 7.5 L66.3 7.5 L66.9 14.7 L63.2 14.7 Z"/></g>
<path d="M67.4 4.4 L74.9 0.4 L74.9 11.6 L67.4 8.3" fill="#9a9a9a" fill-opacity="0" stroke="#9a9a9a" stroke-width="1.3"/>
<rect x="75.4" y="5.2" width="1.4" height="2.4" fill="#9a9a9a"/>
</svg>
<div class="t" style="left:1359.5px;top:380.5px;font-size:13px;line-height:16px;color:#111">9</div>
<div class="t" style="left:1376.5px;top:382.5px;font-size:13px;line-height:16px;color:#111">廿五</div>
<div class="ln" style="left:1354.5px;top:502.0px;width:210.5px;height:1px;background:#dcdcdc"></div>
<svg style="left:1361.0px;top:508.0px" width="116" height="16" viewBox="0 0 116 16">
<g fill="none" stroke="#9a9a9a">
<circle cx="6.9" cy="7.4" r="6.4" stroke-width="1.9"/>
<path d="M3.6 6.9 L6.1 9.7 L10.2 5.6" stroke-width="2.6"/>
<path d="M41.8 11.4 A6.2 6.2 0 1 1 42.2 3.6" stroke-width="2.4"/>
<rect x="94.2" y="0.6" width="18.6" height="13.8" rx="1.6" stroke-width="1.4"/>
<path d="M94.4 3.8 L103.5 10.6 L112.6 3.8" stroke-width="1.5"/>
</g>
<path d="M44.6 0.2 L44.7 6.2 L38.6 6.2 Z" fill="#9a9a9a"/>
<g fill="#9a9a9a"><path d="M59.6 4 L67.6 4 L67.6 7.9 L59.6 7.9 Z"/><path d="M62.4 7.5 L66.3 7.5 L66.9 14.7 L63.2 14.7 Z"/></g>
<path d="M67.4 4.4 L74.9 0.4 L74.9 11.6 L67.4 8.3" fill="#9a9a9a" fill-opacity="0" stroke="#9a9a9a" stroke-width="1.3"/>
<rect x="75.4" y="5.2" width="1.4" height="2.4" fill="#9a9a9a"/>
</svg>
<div class="t" style="left:1573.0px;top:380.5px;font-size:13px;line-height:16px;color:#111">10</div>
<div class="t" style="left:1596.5px;top:382.5px;font-size:13px;line-height:16px;color:#111">廿六</div>
<div class="ln" style="left:1568.0px;top:502.0px;width:208.5px;height:1px;background:#dcdcdc"></div>
<svg style="left:1577.9px;top:508.0px" width="116" height="16" viewBox="0 0 116 16">
<g fill="none" stroke="#9a9a9a">
<circle cx="6.9" cy="7.4" r="6.4" stroke-width="1.9"/>
<path d="M3.6 6.9 L6.1 9.7 L10.2 5.6" stroke-width="2.6"/>
<path d="M41.8 11.4 A6.2 6.2 0 1 1 42.2 3.6" stroke-width="2.4"/>
<rect x="94.2" y="0.6" width="18.6" height="13.8" rx="1.6" stroke-width="1.4"/>
<path d="M94.4 3.8 L103.5 10.6 L112.6 3.8" stroke-width="1.5"/>
</g>
<path d="M44.6 0.2 L44.7 6.2 L38.6 6.2 Z" fill="#9a9a9a"/>
<g fill="#9a9a9a"><path d="M59.6 4 L67.6 4 L67.6 7.9 L59.6 7.9 Z"/><path d="M62.4 7.5 L66.3 7.5 L66.9 14.7 L63.2 14.7 Z"/></g>
<path d="M67.4 4.4 L74.9 0.4 L74.9 11.6 L67.4 8.3" fill="#9a9a9a" fill-opacity="0" stroke="#9a9a9a" stroke-width="1.3"/>
<rect x="75.4" y="5.2" width="1.4" height="2.4" fill="#9a9a9a"/>
</svg>
<div class="t" style="left:290.5px;top:531.5px;font-size:13px;line-height:16px;color:#111">11</div>
<div class="t" style="left:314.0px;top:533.5px;font-size:13px;line-height:16px;color:#111">廿七</div>
<div class="t" style="left:291.5px;top:555.4px;font-size:13px;line-height:16px;color:#28a05a">1.&nbsp;任务1</div>
<svg style="left:458.5px;top:555.9px" width="13" height="10" viewBox="0 0 13 10"><path d="M1.2 4.6 L4.8 8.2 L11.8 1.2" fill="none" stroke="#1f9d4c" stroke-width="3.2"/></svg>
<svg style="left:478.0px;top:555.9px" width="10" height="10" viewBox="0 0 10 10"><path d="M8.2 2.2 A4 4 0 1 0 8.5 7.2" fill="none" stroke="#2a78c6" stroke-width="2"/><path d="M9.8 0 L9.8 4.6 L5.2 4.6Z" fill="#2a78c6"/></svg>
<div class="t" style="left:291.5px;top:574.4px;font-size:13px;line-height:16px;color:#28a05a">2.&nbsp;任务2</div>
<svg style="left:458.5px;top:574.9px" width="13" height="10" viewBox="0 0 13 10"><path d="M1.2 4.6 L4.8 8.2 L11.8 1.2" fill="none" stroke="#1f9d4c" stroke-width="3.2"/></svg>
<div class="t" style="left:291.5px;top:593.4px;font-size:13px;line-height:16px;color:#28a05a">3.&nbsp;任务3</div>
<svg style="left:458.5px;top:593.9px" width="13" height="10" viewBox="0 0 13 10"><path d="M1.2 4.6 L4.8 8.2 L11.8 1.2" fill="none" stroke="#1f9d4c" stroke-width="3.2"/></svg>
<div class="t" style="left:291.5px;top:612.4px;font-size:13px;line-height:16px;color:#28a05a">4.&nbsp;任务4</div>
<svg style="left:458.5px;top:612.9px" width="13" height="10" viewBox="0 0 13 10"><path d="M1.2 4.6 L4.8 8.2 L11.8 1.2" fill="none" stroke="#1f9d4c" stroke-width="3.2"/></svg>
<div class="ln" style="left:285.5px;top:653.0px;width:211.0px;height:1px;background:#dcdcdc"></div>
<svg style="left:292.0px;top:659.0px" width="116" height="16" viewBox="0 0 116 16">
<g fill="none" stroke="#9a9a9a">
<circle cx="6.9" cy="7.4" r="6.4" stroke-width="1.9"/>
<path d="M3.6 6.9 L6.1 9.7 L10.2 5.6" stroke-width="2.6"/>
<path d="M41.8 11.4 A6.2 6.2 0 1 1 42.2 3.6" stroke-width="2.4"/>
<rect x="94.2" y="0.6" width="18.6" height="13.8" rx="1.6" stroke-width="1.4"/>
<path d="M94.4 3.8 L103.5 10.6 L112.6 3.8" stroke-width="1.5"/>
</g>
<path d="M44.6 0.2 L44.7 6.2 L38.6 6.2 Z" fill="#9a9a9a"/>
<g fill="#9a9a9a"><path d="M59.6 4 L67.6 4 L67.6 7.9 L59.6 7.9 Z"/><path d="M62.4 7.5 L66.3 7.5 L66.9 14.7 L63.2 14.7 Z"/></g>
<path d="M67.4 4.4 L74.9 0.4 L74.9 11.6 L67.4 8.3" fill="#9a9a9a" fill-opacity="0" stroke="#9a9a9a" stroke-width="1.3"/>
<rect x="75.4" y="5.2" width="1.4" height="2.4" fill="#9a9a9a"/>
</svg>
<div class="t" style="left:504.5px;top:531.5px;font-size:13px;line-height:16px;color:#111">12</div>
<div class="t" style="left:528.0px;top:533.5px;font-size:13px;line-height:16px;color:#111">廿八</div>
<div class="t" style="left:508.5px;top:555.4px;font-size:13px;line-height:16px;color:#28a05a">1.&nbsp;任务1</div>
<svg style="left:675.0px;top:555.9px" width="13" height="10" viewBox="0 0 13 10"><path d="M1.2 4.6 L4.8 8.2 L11.8 1.2" fill="none" stroke="#1f9d4c" stroke-width="3.2"/></svg>
<svg style="left:694.5px;top:555.9px" width="10" height="10" viewBox="0 0 10 10"><path d="M8.2 2.2 A4 4 0 1 0 8.5 7.2" fill="none" stroke="#2a78c6" stroke-width="2"/><path d="M9.8 0 L9.8 4.6 L5.2 4.6Z" fill="#2a78c6"/></svg>
<div class="t" style="left:508.5px;top:574.4px;font-size:13px;line-height:16px;color:#28a05a">2.&nbsp;任务2</div>
<svg style="left:675.0px;top:574.9px" width="13" height="10" viewBox="0 0 13 10"><path d="M1.2 4.6 L4.8 8.2 L11.8 1.2" fill="none" stroke="#1f9d4c" stroke-width="3.2"/></svg>
<div class="t" style="left:508.5px;top:593.4px;font-size:13px;line-height:16px;color:#28a05a">3.&nbsp;任务3</div>
<svg style="left:675.0px;top:593.9px" width="13" height="10" viewBox="0 0 13 10"><path d="M1.2 4.6 L4.8 8.2 L11.8 1.2" fill="none" stroke="#1f9d4c" stroke-width="3.2"/></svg>
<div class="t" style="left:508.5px;top:612.4px;font-size:13px;line-height:16px;color:#28a05a">4.&nbsp;任务4</div>
<svg style="left:675.0px;top:612.9px" width="13" height="10" viewBox="0 0 13 10"><path d="M1.2 4.6 L4.8 8.2 L11.8 1.2" fill="none" stroke="#1f9d4c" stroke-width="3.2"/></svg>
<div class="ln" style="left:499.5px;top:653.0px;width:210.5px;height:1px;background:#dcdcdc"></div>
<svg style="left:506.0px;top:659.0px" width="116" height="16" viewBox="0 0 116 16">
<g fill="none" stroke="#9a9a9a">
<circle cx="6.9" cy="7.4" r="6.4" stroke-width="1.9"/>
<path d="M3.6 6.9 L6.1 9.7 L10.2 5.6" stroke-width="2.6"/>
<path d="M41.8 11.4 A6.2 6.2 0 1 1 42.2 3.6" stroke-width="2.4"/>
<rect x="94.2" y="0.6" width="18.6" height="13.8" rx="1.6" stroke-width="1.4"/>
<path d="M94.4 3.8 L103.5 10.6 L112.6 3.8" stroke-width="1.5"/>
</g>
<path d="M44.6 0.2 L44.7 6.2 L38.6 6.2 Z" fill="#9a9a9a"/>
<g fill="#9a9a9a"><path d="M59.6 4 L67.6 4 L67.6 7.9 L59.6 7.9 Z"/><path d="M62.4 7.5 L66.3 7.5 L66.9 14.7 L63.2 14.7 Z"/></g>
<path d="M67.4 4.4 L74.9 0.4 L74.9 11.6 L67.4 8.3" fill="#9a9a9a" fill-opacity="0" stroke="#9a9a9a" stroke-width="1.3"/>
<rect x="75.4" y="5.2" width="1.4" height="2.4" fill="#9a9a9a"/>
</svg>
<div class="t" style="left:718.0px;top:531.5px;font-size:13px;line-height:16px;color:#111">13</div>
<div class="t" style="left:741.5px;top:533.5px;font-size:13px;line-height:16px;color:#111">廿九</div>
<div class="t" style="left:719.0px;top:558.3px;font-size:13px;line-height:16px;color:#28a05a">1.&nbsp;任务1</div>
<svg style="left:885.5px;top:558.8px" width="13" height="10" viewBox="0 0 13 10"><path d="M1.2 4.6 L4.8 8.2 L11.8 1.2" fill="none" stroke="#1f9d4c" stroke-width="3.2"/></svg>
<svg style="left:905.0px;top:558.8px" width="10" height="10" viewBox="0 0 10 10"><path d="M8.2 2.2 A4 4 0 1 0 8.5 7.2" fill="none" stroke="#2a78c6" stroke-width="2"/><path d="M9.8 0 L9.8 4.6 L5.2 4.6Z" fill="#2a78c6"/></svg>
<div class="t" style="left:719.0px;top:577.3px;font-size:13px;line-height:16px;color:#28a05a">2.&nbsp;任务2</div>
<svg style="left:885.5px;top:577.8px" width="13" height="10" viewBox="0 0 13 10"><path d="M1.2 4.6 L4.8 8.2 L11.8 1.2" fill="none" stroke="#1f9d4c" stroke-width="3.2"/></svg>
<div class="t" style="left:719.0px;top:596.3px;font-size:13px;line-height:16px;color:#28a05a">3.&nbsp;任务3</div>
<svg style="left:885.5px;top:596.8px" width="13" height="10" viewBox="0 0 13 10"><path d="M1.2 4.6 L4.8 8.2 L11.8 1.2" fill="none" stroke="#1f9d4c" stroke-width="3.2"/></svg>
<div class="t" style="left:719.0px;top:615.3px;font-size:13px;line-height:16px;color:#28a05a">4.&nbsp;任务4</div>
<svg style="left:885.5px;top:615.8px" width="13" height="10" viewBox="0 0 13 10"><path d="M1.2 4.6 L4.8 8.2 L11.8 1.2" fill="none" stroke="#1f9d4c" stroke-width="3.2"/></svg>
<div class="ln" style="left:713.0px;top:653.0px;width:210.5px;height:1px;background:#dcdcdc"></div>
<svg style="left:719.5px;top:659.0px" width="116" height="16" viewBox="0 0 116 16">
<g fill="none" stroke="#9a9a9a">
<circle cx="6.9" cy="7.4" r="6.4" stroke-width="1.9"/>
<path d="M3.6 6.9 L6.1 9.7 L10.2 5.6" stroke-width="2.6"/>
<path d="M41.8 11.4 A6.2 6.2 0 1 1 42.2 3.6" stroke-width="2.4"/>
<rect x="94.2" y="0.6" width="18.6" height="13.8" rx="1.6" stroke-width="1.4"/>
<path d="M94.4 3.8 L103.5 10.6 L112.6 3.8" stroke-width="1.5"/>
</g>
<path d="M44.6 0.2 L44.7 6.2 L38.6 6.2 Z" fill="#9a9a9a"/>
<g fill="#9a9a9a"><path d="M59.6 4 L67.6 4 L67.6 7.9 L59.6 7.9 Z"/><path d="M62.4 7.5 L66.3 7.5 L66.9 14.7 L63.2 14.7 Z"/></g>
<path d="M67.4 4.4 L74.9 0.4 L74.9 11.6 L67.4 8.3" fill="#9a9a9a" fill-opacity="0" stroke="#9a9a9a" stroke-width="1.3"/>
<rect x="75.4" y="5.2" width="1.4" height="2.4" fill="#9a9a9a"/>
</svg>
<div class="t" style="left:931.5px;top:531.5px;font-size:13px;line-height:16px;color:#111">14</div>
<div class="t" style="left:955.0px;top:533.5px;font-size:13px;line-height:16px;color:#111">三十</div>
<div class="t" style="left:932.5px;top:558.3px;font-size:13px;line-height:16px;color:#28a05a">1.&nbsp;任务1</div>
<svg style="left:1099.6px;top:558.8px" width="13" height="10" viewBox="0 0 13 10"><path d="M1.2 4.6 L4.8 8.2 L11.8 1.2" fill="none" stroke="#1f9d4c" stroke-width="3.2"/></svg>
<svg style="left:1119.1px;top:558.8px" width="10" height="10" viewBox="0 0 10 10"><path d="M8.2 2.2 A4 4 0 1 0 8.5 7.2" fill="none" stroke="#2a78c6" stroke-width="2"/><path d="M9.8 0 L9.8 4.6 L5.2 4.6Z" fill="#2a78c6"/></svg>
<div class="t" style="left:932.5px;top:577.3px;font-size:13px;line-height:16px;color:#28a05a">2.&nbsp;任务2</div>
<svg style="left:1099.6px;top:577.8px" width="13" height="10" viewBox="0 0 13 10"><path d="M1.2 4.6 L4.8 8.2 L11.8 1.2" fill="none" stroke="#1f9d4c" stroke-width="3.2"/></svg>
<div class="t" style="left:932.5px;top:596.3px;font-size:13px;line-height:16px;color:#28a05a">3.&nbsp;任务3</div>
<svg style="left:1099.6px;top:596.8px" width="13" height="10" viewBox="0 0 13 10"><path d="M1.2 4.6 L4.8 8.2 L11.8 1.2" fill="none" stroke="#1f9d4c" stroke-width="3.2"/></svg>
<div class="t" style="left:932.5px;top:615.3px;font-size:13px;line-height:16px;color:#28a05a">4.&nbsp;任务4</div>
<svg style="left:1099.6px;top:615.8px" width="13" height="10" viewBox="0 0 13 10"><path d="M1.2 4.6 L4.8 8.2 L11.8 1.2" fill="none" stroke="#1f9d4c" stroke-width="3.2"/></svg>
<div class="ln" style="left:926.5px;top:653.0px;width:211.1px;height:1px;background:#dcdcdc"></div>
<svg style="left:933.0px;top:659.0px" width="116" height="16" viewBox="0 0 116 16">
<g fill="none" stroke="#9a9a9a">
<circle cx="6.9" cy="7.4" r="6.4" stroke-width="1.9"/>
<path d="M3.6 6.9 L6.1 9.7 L10.2 5.6" stroke-width="2.6"/>
<path d="M41.8 11.4 A6.2 6.2 0 1 1 42.2 3.6" stroke-width="2.4"/>
<rect x="94.2" y="0.6" width="18.6" height="13.8" rx="1.6" stroke-width="1.4"/>
<path d="M94.4 3.8 L103.5 10.6 L112.6 3.8" stroke-width="1.5"/>
</g>
<path d="M44.6 0.2 L44.7 6.2 L38.6 6.2 Z" fill="#9a9a9a"/>
<g fill="#9a9a9a"><path d="M59.6 4 L67.6 4 L67.6 7.9 L59.6 7.9 Z"/><path d="M62.4 7.5 L66.3 7.5 L66.9 14.7 L63.2 14.7 Z"/></g>
<path d="M67.4 4.4 L74.9 0.4 L74.9 11.6 L67.4 8.3" fill="#9a9a9a" fill-opacity="0" stroke="#9a9a9a" stroke-width="1.3"/>
<rect x="75.4" y="5.2" width="1.4" height="2.4" fill="#9a9a9a"/>
</svg>
<div class="t" style="left:1145.6px;top:531.5px;font-size:13px;line-height:16px;color:#111">15</div>
<div class="t" style="left:1169.1px;top:533.5px;font-size:13px;line-height:16px;color:#111">农历八月</div>
<div class="t" style="left:1146.6px;top:561.2px;font-size:13px;line-height:16px;color:#28a05a">1.&nbsp;任务1</div>
<svg style="left:1313.5px;top:561.7px" width="13" height="10" viewBox="0 0 13 10"><path d="M1.2 4.6 L4.8 8.2 L11.8 1.2" fill="none" stroke="#1f9d4c" stroke-width="3.2"/></svg>
<svg style="left:1333.0px;top:561.7px" width="10" height="10" viewBox="0 0 10 10"><path d="M8.2 2.2 A4 4 0 1 0 8.5 7.2" fill="none" stroke="#2a78c6" stroke-width="2"/><path d="M9.8 0 L9.8 4.6 L5.2 4.6Z" fill="#2a78c6"/></svg>
<div class="t" style="left:1146.6px;top:580.2px;font-size:13px;line-height:16px;color:#28a05a">2.&nbsp;任务2</div>
<svg style="left:1313.5px;top:580.7px" width="13" height="10" viewBox="0 0 13 10"><path d="M1.2 4.6 L4.8 8.2 L11.8 1.2" fill="none" stroke="#1f9d4c" stroke-width="3.2"/></svg>
<div class="t" style="left:1146.6px;top:599.2px;font-size:13px;line-height:16px;color:#28a05a">3.&nbsp;任务3</div>
<svg style="left:1313.5px;top:599.7px" width="13" height="10" viewBox="0 0 13 10"><path d="M1.2 4.6 L4.8 8.2 L11.8 1.2" fill="none" stroke="#1f9d4c" stroke-width="3.2"/></svg>
<div class="t" style="left:1146.6px;top:618.2px;font-size:13px;line-height:16px;color:#28a05a">4.&nbsp;任务4</div>
<svg style="left:1313.5px;top:618.7px" width="13" height="10" viewBox="0 0 13 10"><path d="M1.2 4.6 L4.8 8.2 L11.8 1.2" fill="none" stroke="#1f9d4c" stroke-width="3.2"/></svg>
<div class="ln" style="left:1140.6px;top:653.0px;width:210.9px;height:1px;background:#dcdcdc"></div>
<svg style="left:1147.1px;top:659.0px" width="116" height="16" viewBox="0 0 116 16">
<g fill="none" stroke="#9a9a9a">
<circle cx="6.9" cy="7.4" r="6.4" stroke-width="1.9"/>
<path d="M3.6 6.9 L6.1 9.7 L10.2 5.6" stroke-width="2.6"/>
<path d="M41.8 11.4 A6.2 6.2 0 1 1 42.2 3.6" stroke-width="2.4"/>
<rect x="94.2" y="0.6" width="18.6" height="13.8" rx="1.6" stroke-width="1.4"/>
<path d="M94.4 3.8 L103.5 10.6 L112.6 3.8" stroke-width="1.5"/>
</g>
<path d="M44.6 0.2 L44.7 6.2 L38.6 6.2 Z" fill="#9a9a9a"/>
<g fill="#9a9a9a"><path d="M59.6 4 L67.6 4 L67.6 7.9 L59.6 7.9 Z"/><path d="M62.4 7.5 L66.3 7.5 L66.9 14.7 L63.2 14.7 Z"/></g>
<path d="M67.4 4.4 L74.9 0.4 L74.9 11.6 L67.4 8.3" fill="#9a9a9a" fill-opacity="0" stroke="#9a9a9a" stroke-width="1.3"/>
<rect x="75.4" y="5.2" width="1.4" height="2.4" fill="#9a9a9a"/>
</svg>
<div class="t" style="left:1359.5px;top:531.5px;font-size:13px;line-height:16px;color:#111">16</div>
<div class="t" style="left:1383.0px;top:533.5px;font-size:13px;line-height:16px;color:#111">初二</div>
<div class="ln" style="left:1354.5px;top:653.0px;width:210.5px;height:1px;background:#dcdcdc"></div>
<svg style="left:1361.0px;top:659.0px" width="116" height="16" viewBox="0 0 116 16">
<g fill="none" stroke="#9a9a9a">
<circle cx="6.9" cy="7.4" r="6.4" stroke-width="1.9"/>
<path d="M3.6 6.9 L6.1 9.7 L10.2 5.6" stroke-width="2.6"/>
<path d="M41.8 11.4 A6.2 6.2 0 1 1 42.2 3.6" stroke-width="2.4"/>
<rect x="94.2" y="0.6" width="18.6" height="13.8" rx="1.6" stroke-width="1.4"/>
<path d="M94.4 3.8 L103.5 10.6 L112.6 3.8" stroke-width="1.5"/>
</g>
<path d="M44.6 0.2 L44.7 6.2 L38.6 6.2 Z" fill="#9a9a9a"/>
<g fill="#9a9a9a"><path d="M59.6 4 L67.6 4 L67.6 7.9 L59.6 7.9 Z"/><path d="M62.4 7.5 L66.3 7.5 L66.9 14.7 L63.2 14.7 Z"/></g>
<path d="M67.4 4.4 L74.9 0.4 L74.9 11.6 L67.4 8.3" fill="#9a9a9a" fill-opacity="0" stroke="#9a9a9a" stroke-width="1.3"/>
<rect x="75.4" y="5.2" width="1.4" height="2.4" fill="#9a9a9a"/>
</svg>
<div class="t" style="left:1573.0px;top:531.5px;font-size:13px;line-height:16px;color:#111">17</div>
<div class="t" style="left:1596.5px;top:533.5px;font-size:13px;line-height:16px;color:#111">初三</div>
<div class="ln" style="left:1568.0px;top:653.0px;width:208.5px;height:1px;background:#dcdcdc"></div>
<svg style="left:1577.9px;top:659.0px" width="116" height="16" viewBox="0 0 116 16">
<g fill="none" stroke="#9a9a9a">
<circle cx="6.9" cy="7.4" r="6.4" stroke-width="1.9"/>
<path d="M3.6 6.9 L6.1 9.7 L10.2 5.6" stroke-width="2.6"/>
<path d="M41.8 11.4 A6.2 6.2 0 1 1 42.2 3.6" stroke-width="2.4"/>
<rect x="94.2" y="0.6" width="18.6" height="13.8" rx="1.6" stroke-width="1.4"/>
<path d="M94.4 3.8 L103.5 10.6 L112.6 3.8" stroke-width="1.5"/>
</g>
<path d="M44.6 0.2 L44.7 6.2 L38.6 6.2 Z" fill="#9a9a9a"/>
<g fill="#9a9a9a"><path d="M59.6 4 L67.6 4 L67.6 7.9 L59.6 7.9 Z"/><path d="M62.4 7.5 L66.3 7.5 L66.9 14.7 L63.2 14.7 Z"/></g>
<path d="M67.4 4.4 L74.9 0.4 L74.9 11.6 L67.4 8.3" fill="#9a9a9a" fill-opacity="0" stroke="#9a9a9a" stroke-width="1.3"/>
<rect x="75.4" y="5.2" width="1.4" height="2.4" fill="#9a9a9a"/>
</svg>
<div class="t" style="left:290.5px;top:682.5px;font-size:13px;line-height:16px;color:#111">18</div>
<div class="t" style="left:314.0px;top:684.5px;font-size:13px;line-height:16px;color:#111">初四</div>
<div class="t" style="left:291.5px;top:709.9px;font-size:13px;line-height:16px;color:#28a05a">1.&nbsp;任务1</div>
<svg style="left:458.5px;top:710.4px" width="13" height="10" viewBox="0 0 13 10"><path d="M1.2 4.6 L4.8 8.2 L11.8 1.2" fill="none" stroke="#1f9d4c" stroke-width="3.2"/></svg>
<svg style="left:478.0px;top:710.4px" width="10" height="10" viewBox="0 0 10 10"><path d="M8.2 2.2 A4 4 0 1 0 8.5 7.2" fill="none" stroke="#2a78c6" stroke-width="2"/><path d="M9.8 0 L9.8 4.6 L5.2 4.6Z" fill="#2a78c6"/></svg>
<div class="t" style="left:291.5px;top:728.9px;font-size:13px;line-height:16px;color:#28a05a">2.&nbsp;任务2</div>
<svg style="left:458.5px;top:729.4px" width="13" height="10" viewBox="0 0 13 10"><path d="M1.2 4.6 L4.8 8.2 L11.8 1.2" fill="none" stroke="#1f9d4c" stroke-width="3.2"/></svg>
<div class="t" style="left:291.5px;top:747.9px;font-size:13px;line-height:16px;color:#28a05a">3.&nbsp;任务3</div>
<svg style="left:458.5px;top:748.4px" width="13" height="10" viewBox="0 0 13 10"><path d="M1.2 4.6 L4.8 8.2 L11.8 1.2" fill="none" stroke="#1f9d4c" stroke-width="3.2"/></svg>
<div class="t" style="left:291.5px;top:766.9px;font-size:13px;line-height:16px;color:#28a05a">4.&nbsp;任务4</div>
<svg style="left:458.5px;top:767.4px" width="13" height="10" viewBox="0 0 13 10"><path d="M1.2 4.6 L4.8 8.2 L11.8 1.2" fill="none" stroke="#1f9d4c" stroke-width="3.2"/></svg>
<div class="ln" style="left:285.5px;top:804.0px;width:211.0px;height:1px;background:#dcdcdc"></div>
<svg style="left:292.0px;top:810.0px" width="116" height="16" viewBox="0 0 116 16">
<g fill="none" stroke="#9a9a9a">
<circle cx="6.9" cy="7.4" r="6.4" stroke-width="1.9"/>
<path d="M3.6 6.9 L6.1 9.7 L10.2 5.6" stroke-width="2.6"/>
<path d="M41.8 11.4 A6.2 6.2 0 1 1 42.2 3.6" stroke-width="2.4"/>
<rect x="94.2" y="0.6" width="18.6" height="13.8" rx="1.6" stroke-width="1.4"/>
<path d="M94.4 3.8 L103.5 10.6 L112.6 3.8" stroke-width="1.5"/>
</g>
<path d="M44.6 0.2 L44.7 6.2 L38.6 6.2 Z" fill="#9a9a9a"/>
<g fill="#9a9a9a"><path d="M59.6 4 L67.6 4 L67.6 7.9 L59.6 7.9 Z"/><path d="M62.4 7.5 L66.3 7.5 L66.9 14.7 L63.2 14.7 Z"/></g>
<path d="M67.4 4.4 L74.9 0.4 L74.9 11.6 L67.4 8.3" fill="#9a9a9a" fill-opacity="0" stroke="#9a9a9a" stroke-width="1.3"/>
<rect x="75.4" y="5.2" width="1.4" height="2.4" fill="#9a9a9a"/>
</svg>
<div class="t" style="left:504.5px;top:682.5px;font-size:13px;line-height:16px;color:#111">19</div>
<div class="t" style="left:528.0px;top:684.5px;font-size:13px;line-height:16px;color:#111">初五</div>
<div class="t" style="left:504.5px;top:710.0px;font-size:13px;line-height:16px;color:#28a05a">1.&nbsp;任务1</div>
<svg style="left:671.0px;top:710.5px" width="13" height="10" viewBox="0 0 13 10"><path d="M1.2 4.6 L4.8 8.2 L11.8 1.2" fill="none" stroke="#1f9d4c" stroke-width="3.2"/></svg>
<svg style="left:690.5px;top:710.5px" width="10" height="10" viewBox="0 0 10 10"><path d="M8.2 2.2 A4 4 0 1 0 8.5 7.2" fill="none" stroke="#2a78c6" stroke-width="2"/><path d="M9.8 0 L9.8 4.6 L5.2 4.6Z" fill="#2a78c6"/></svg>
<div class="t" style="left:504.5px;top:729.0px;font-size:13px;line-height:16px;color:#28a05a">2.&nbsp;任务2</div>
<svg style="left:671.0px;top:729.5px" width="13" height="10" viewBox="0 0 13 10"><path d="M1.2 4.6 L4.8 8.2 L11.8 1.2" fill="none" stroke="#1f9d4c" stroke-width="3.2"/></svg>
<div class="t" style="left:504.5px;top:748.0px;font-size:13px;line-height:16px;color:#111">3.&nbsp;任务3</div>
<div class="t" style="left:504.5px;top:767.0px;font-size:13px;line-height:16px;color:#111">4.&nbsp;任务4</div>
<div class="ln" style="left:499.5px;top:804.0px;width:210.5px;height:1px;background:#b3c9e2"></div>
<svg style="left:506.0px;top:810.0px" width="116" height="16" viewBox="0 0 116 16">
<g fill="none" stroke="#9a9a9a">
<circle cx="6.9" cy="7.4" r="6.4" stroke-width="1.9"/>
<path d="M3.6 6.9 L6.1 9.7 L10.2 5.6" stroke-width="2.6"/>
<path d="M41.8 11.4 A6.2 6.2 0 1 1 42.2 3.6" stroke-width="2.4"/>
<rect x="94.2" y="0.6" width="18.6" height="13.8" rx="1.6" stroke-width="1.4"/>
<path d="M94.4 3.8 L103.5 10.6 L112.6 3.8" stroke-width="1.5"/>
</g>
<path d="M44.6 0.2 L44.7 6.2 L38.6 6.2 Z" fill="#9a9a9a"/>
<g fill="#9a9a9a"><path d="M59.6 4 L67.6 4 L67.6 7.9 L59.6 7.9 Z"/><path d="M62.4 7.5 L66.3 7.5 L66.9 14.7 L63.2 14.7 Z"/></g>
<path d="M67.4 4.4 L74.9 0.4 L74.9 11.6 L67.4 8.3" fill="#9a9a9a" fill-opacity="0" stroke="#9a9a9a" stroke-width="1.3"/>
<rect x="75.4" y="5.2" width="1.4" height="2.4" fill="#9a9a9a"/>
</svg>
<div class="a" style="left:497.0px;top:678.0px;width:214.5px;height:152.0px;border:1px solid #5f93d0"></div>
<div class="t" style="left:718.0px;top:682.5px;font-size:13px;line-height:16px;color:#111">20</div>
<div class="t" style="left:741.5px;top:684.5px;font-size:13px;line-height:16px;color:#111">初六</div>
<div class="t" style="left:719.0px;top:709.8px;font-size:13px;line-height:16px;color:#111">1.&nbsp;任务1</div>
<svg style="left:905.0px;top:710.3px" width="10" height="10" viewBox="0 0 10 10"><path d="M8.2 2.2 A4 4 0 1 0 8.5 7.2" fill="none" stroke="#2a78c6" stroke-width="2"/><path d="M9.8 0 L9.8 4.6 L5.2 4.6Z" fill="#2a78c6"/></svg>
<div class="t" style="left:719.0px;top:728.8px;font-size:13px;line-height:16px;color:#111">2.&nbsp;任务2</div>
<div class="t" style="left:719.0px;top:747.8px;font-size:13px;line-height:16px;color:#111">3.&nbsp;任务3</div>
<div class="t" style="left:719.0px;top:766.8px;font-size:13px;line-height:16px;color:#111">4.&nbsp;任务4</div>
<div class="ln" style="left:713.0px;top:804.0px;width:210.5px;height:1px;background:#dcdcdc"></div>
<svg style="left:719.5px;top:810.0px" width="116" height="16" viewBox="0 0 116 16">
<g fill="none" stroke="#9a9a9a">
<circle cx="6.9" cy="7.4" r="6.4" stroke-width="1.9"/>
<path d="M3.6 6.9 L6.1 9.7 L10.2 5.6" stroke-width="2.6"/>
<path d="M41.8 11.4 A6.2 6.2 0 1 1 42.2 3.6" stroke-width="2.4"/>
<rect x="94.2" y="0.6" width="18.6" height="13.8" rx="1.6" stroke-width="1.4"/>
<path d="M94.4 3.8 L103.5 10.6 L112.6 3.8" stroke-width="1.5"/>
</g>
<path d="M44.6 0.2 L44.7 6.2 L38.6 6.2 Z" fill="#9a9a9a"/>
<g fill="#9a9a9a"><path d="M59.6 4 L67.6 4 L67.6 7.9 L59.6 7.9 Z"/><path d="M62.4 7.5 L66.3 7.5 L66.9 14.7 L63.2 14.7 Z"/></g>
<path d="M67.4 4.4 L74.9 0.4 L74.9 11.6 L67.4 8.3" fill="#9a9a9a" fill-opacity="0" stroke="#9a9a9a" stroke-width="1.3"/>
<rect x="75.4" y="5.2" width="1.4" height="2.4" fill="#9a9a9a"/>
</svg>
<div class="t" style="left:931.5px;top:682.5px;font-size:13px;line-height:16px;color:#111">21</div>
<div class="t" style="left:955.0px;top:684.5px;font-size:13px;line-height:16px;color:#111">初七</div>
<div class="t" style="left:932.5px;top:709.8px;font-size:13px;line-height:16px;color:#111">1.&nbsp;任务1</div>
<svg style="left:1119.1px;top:710.3px" width="10" height="10" viewBox="0 0 10 10"><path d="M8.2 2.2 A4 4 0 1 0 8.5 7.2" fill="none" stroke="#2a78c6" stroke-width="2"/><path d="M9.8 0 L9.8 4.6 L5.2 4.6Z" fill="#2a78c6"/></svg>
<div class="t" style="left:932.5px;top:728.8px;font-size:13px;line-height:16px;color:#111">2.&nbsp;任务2</div>
<div class="t" style="left:932.5px;top:747.8px;font-size:13px;line-height:16px;color:#111">3.&nbsp;任务3</div>
<div class="t" style="left:932.5px;top:766.8px;font-size:13px;line-height:16px;color:#111">4.&nbsp;任务4</div>
<div class="ln" style="left:926.5px;top:804.0px;width:211.1px;height:1px;background:#dcdcdc"></div>
<svg style="left:933.0px;top:810.0px" width="116" height="16" viewBox="0 0 116 16">
<g fill="none" stroke="#9a9a9a">
<circle cx="6.9" cy="7.4" r="6.4" stroke-width="1.9"/>
<path d="M3.6 6.9 L6.1 9.7 L10.2 5.6" stroke-width="2.6"/>
<path d="M41.8 11.4 A6.2 6.2 0 1 1 42.2 3.6" stroke-width="2.4"/>
<rect x="94.2" y="0.6" width="18.6" height="13.8" rx="1.6" stroke-width="1.4"/>
<path d="M94.4 3.8 L103.5 10.6 L112.6 3.8" stroke-width="1.5"/>
</g>
<path d="M44.6 0.2 L44.7 6.2 L38.6 6.2 Z" fill="#9a9a9a"/>
<g fill="#9a9a9a"><path d="M59.6 4 L67.6 4 L67.6 7.9 L59.6 7.9 Z"/><path d="M62.4 7.5 L66.3 7.5 L66.9 14.7 L63.2 14.7 Z"/></g>
<path d="M67.4 4.4 L74.9 0.4 L74.9 11.6 L67.4 8.3" fill="#9a9a9a" fill-opacity="0" stroke="#9a9a9a" stroke-width="1.3"/>
<rect x="75.4" y="5.2" width="1.4" height="2.4" fill="#9a9a9a"/>
</svg>
<div class="t" style="left:1145.6px;top:682.5px;font-size:13px;line-height:16px;color:#111">22</div>
<div class="t" style="left:1169.1px;top:684.5px;font-size:13px;line-height:16px;color:#111">初八</div>
<div class="t" style="left:1146.6px;top:709.8px;font-size:13px;line-height:16px;color:#111">1.&nbsp;任务1</div>
<svg style="left:1333.0px;top:710.3px" width="10" height="10" viewBox="0 0 10 10"><path d="M8.2 2.2 A4 4 0 1 0 8.5 7.2" fill="none" stroke="#2a78c6" stroke-width="2"/><path d="M9.8 0 L9.8 4.6 L5.2 4.6Z" fill="#2a78c6"/></svg>
<div class="t" style="left:1146.6px;top:728.8px;font-size:13px;line-height:16px;color:#111">2.&nbsp;任务2</div>
<div class="t" style="left:1146.6px;top:747.8px;font-size:13px;line-height:16px;color:#111">3.&nbsp;任务3</div>
<div class="t" style="left:1146.6px;top:766.8px;font-size:13px;line-height:16px;color:#111">4.&nbsp;任务4</div>
<div class="ln" style="left:1140.6px;top:804.0px;width:210.9px;height:1px;background:#dcdcdc"></div>
<svg style="left:1147.1px;top:810.0px" width="116" height="16" viewBox="0 0 116 16">
<g fill="none" stroke="#9a9a9a">
<circle cx="6.9" cy="7.4" r="6.4" stroke-width="1.9"/>
<path d="M3.6 6.9 L6.1 9.7 L10.2 5.6" stroke-width="2.6"/>
<path d="M41.8 11.4 A6.2 6.2 0 1 1 42.2 3.6" stroke-width="2.4"/>
<rect x="94.2" y="0.6" width="18.6" height="13.8" rx="1.6" stroke-width="1.4"/>
<path d="M94.4 3.8 L103.5 10.6 L112.6 3.8" stroke-width="1.5"/>
</g>
<path d="M44.6 0.2 L44.7 6.2 L38.6 6.2 Z" fill="#9a9a9a"/>
<g fill="#9a9a9a"><path d="M59.6 4 L67.6 4 L67.6 7.9 L59.6 7.9 Z"/><path d="M62.4 7.5 L66.3 7.5 L66.9 14.7 L63.2 14.7 Z"/></g>
<path d="M67.4 4.4 L74.9 0.4 L74.9 11.6 L67.4 8.3" fill="#9a9a9a" fill-opacity="0" stroke="#9a9a9a" stroke-width="1.3"/>
<rect x="75.4" y="5.2" width="1.4" height="2.4" fill="#9a9a9a"/>
</svg>
<div class="t" style="left:1359.5px;top:682.5px;font-size:13px;line-height:16px;color:#111">23</div>
<div class="t" style="left:1383.0px;top:684.5px;font-size:13px;line-height:16px;color:#111">秋分</div>
<div class="ln" style="left:1354.5px;top:804.0px;width:210.5px;height:1px;background:#dcdcdc"></div>
<svg style="left:1361.0px;top:810.0px" width="116" height="16" viewBox="0 0 116 16">
<g fill="none" stroke="#9a9a9a">
<circle cx="6.9" cy="7.4" r="6.4" stroke-width="1.9"/>
<path d="M3.6 6.9 L6.1 9.7 L10.2 5.6" stroke-width="2.6"/>
<path d="M41.8 11.4 A6.2 6.2 0 1 1 42.2 3.6" stroke-width="2.4"/>
<rect x="94.2" y="0.6" width="18.6" height="13.8" rx="1.6" stroke-width="1.4"/>
<path d="M94.4 3.8 L103.5 10.6 L112.6 3.8" stroke-width="1.5"/>
</g>
<path d="M44.6 0.2 L44.7 6.2 L38.6 6.2 Z" fill="#9a9a9a"/>
<g fill="#9a9a9a"><path d="M59.6 4 L67.6 4 L67.6 7.9 L59.6 7.9 Z"/><path d="M62.4 7.5 L66.3 7.5 L66.9 14.7 L63.2 14.7 Z"/></g>
<path d="M67.4 4.4 L74.9 0.4 L74.9 11.6 L67.4 8.3" fill="#9a9a9a" fill-opacity="0" stroke="#9a9a9a" stroke-width="1.3"/>
<rect x="75.4" y="5.2" width="1.4" height="2.4" fill="#9a9a9a"/>
</svg>
<div class="t" style="left:1573.0px;top:682.5px;font-size:13px;line-height:16px;color:#111">24</div>
<div class="t" style="left:1596.5px;top:684.5px;font-size:13px;line-height:16px;color:#111">初十</div>
<div class="ln" style="left:1568.0px;top:804.0px;width:208.5px;height:1px;background:#dcdcdc"></div>
<svg style="left:1577.9px;top:810.0px" width="116" height="16" viewBox="0 0 116 16">
<g fill="none" stroke="#9a9a9a">
<circle cx="6.9" cy="7.4" r="6.4" stroke-width="1.9"/>
<path d="M3.6 6.9 L6.1 9.7 L10.2 5.6" stroke-width="2.6"/>
<path d="M41.8 11.4 A6.2 6.2 0 1 1 42.2 3.6" stroke-width="2.4"/>
<rect x="94.2" y="0.6" width="18.6" height="13.8" rx="1.6" stroke-width="1.4"/>
<path d="M94.4 3.8 L103.5 10.6 L112.6 3.8" stroke-width="1.5"/>
</g>
<path d="M44.6 0.2 L44.7 6.2 L38.6 6.2 Z" fill="#9a9a9a"/>
<g fill="#9a9a9a"><path d="M59.6 4 L67.6 4 L67.6 7.9 L59.6 7.9 Z"/><path d="M62.4 7.5 L66.3 7.5 L66.9 14.7 L63.2 14.7 Z"/></g>
<path d="M67.4 4.4 L74.9 0.4 L74.9 11.6 L67.4 8.3" fill="#9a9a9a" fill-opacity="0" stroke="#9a9a9a" stroke-width="1.3"/>
<rect x="75.4" y="5.2" width="1.4" height="2.4" fill="#9a9a9a"/>
</svg>
<div class="t" style="left:290.5px;top:833.5px;font-size:13px;line-height:16px;color:#111">25</div>
<div class="t" style="left:314.0px;top:835.5px;font-size:13px;line-height:16px;color:#111">十一</div>
<div class="t" style="left:291.5px;top:860.9px;font-size:13px;line-height:16px;color:#111">1.&nbsp;任务1</div>
<svg style="left:478.0px;top:861.4px" width="10" height="10" viewBox="0 0 10 10"><path d="M8.2 2.2 A4 4 0 1 0 8.5 7.2" fill="none" stroke="#2a78c6" stroke-width="2"/><path d="M9.8 0 L9.8 4.6 L5.2 4.6Z" fill="#2a78c6"/></svg>
<div class="t" style="left:291.5px;top:879.9px;font-size:13px;line-height:16px;color:#111">2.&nbsp;任务2</div>
<div class="t" style="left:291.5px;top:898.9px;font-size:13px;line-height:16px;color:#111">3.&nbsp;任务3</div>
<div class="t" style="left:291.5px;top:917.9px;font-size:13px;line-height:16px;color:#111">4.&nbsp;任务4</div>
<div class="ln" style="left:285.5px;top:955.0px;width:211.0px;height:1px;background:#dcdcdc"></div>
<svg style="left:292.0px;top:961.0px" width="116" height="16" viewBox="0 0 116 16">
<g fill="none" stroke="#9a9a9a">
<circle cx="6.9" cy="7.4" r="6.4" stroke-width="1.9"/>
<path d="M3.6 6.9 L6.1 9.7 L10.2 5.6" stroke-width="2.6"/>
<path d="M41.8 11.4 A6.2 6.2 0 1 1 42.2 3.6" stroke-width="2.4"/>
<rect x="94.2" y="0.6" width="18.6" height="13.8" rx="1.6" stroke-width="1.4"/>
<path d="M94.4 3.8 L103.5 10.6 L112.6 3.8" stroke-width="1.5"/>
</g>
<path d="M44.6 0.2 L44.7 6.2 L38.6 6.2 Z" fill="#9a9a9a"/>
<g fill="#9a9a9a"><path d="M59.6 4 L67.6 4 L67.6 7.9 L59.6 7.9 Z"/><path d="M62.4 7.5 L66.3 7.5 L66.9 14.7 L63.2 14.7 Z"/></g>
<path d="M67.4 4.4 L74.9 0.4 L74.9 11.6 L67.4 8.3" fill="#9a9a9a" fill-opacity="0" stroke="#9a9a9a" stroke-width="1.3"/>
<rect x="75.4" y="5.2" width="1.4" height="2.4" fill="#9a9a9a"/>
</svg>
<div class="t" style="left:504.5px;top:833.5px;font-size:13px;line-height:16px;color:#111">26</div>
<div class="t" style="left:528.0px;top:835.5px;font-size:13px;line-height:16px;color:#111">十二</div>
<div class="t" style="left:504.5px;top:860.9px;font-size:13px;line-height:16px;color:#111">1.&nbsp;任务1</div>
<svg style="left:690.5px;top:861.4px" width="10" height="10" viewBox="0 0 10 10"><path d="M8.2 2.2 A4 4 0 1 0 8.5 7.2" fill="none" stroke="#2a78c6" stroke-width="2"/><path d="M9.8 0 L9.8 4.6 L5.2 4.6Z" fill="#2a78c6"/></svg>
<div class="t" style="left:504.5px;top:879.9px;font-size:13px;line-height:16px;color:#111">2.&nbsp;任务2</div>
<div class="t" style="left:504.5px;top:898.9px;font-size:13px;line-height:16px;color:#111">3.&nbsp;任务3</div>
<div class="t" style="left:504.5px;top:917.9px;font-size:13px;line-height:16px;color:#111">4.&nbsp;任务4</div>
<div class="ln" style="left:499.5px;top:955.0px;width:210.5px;height:1px;background:#dcdcdc"></div>
<svg style="left:506.0px;top:961.0px" width="116" height="16" viewBox="0 0 116 16">
<g fill="none" stroke="#9a9a9a">
<circle cx="6.9" cy="7.4" r="6.4" stroke-width="1.9"/>
<path d="M3.6 6.9 L6.1 9.7 L10.2 5.6" stroke-width="2.6"/>
<path d="M41.8 11.4 A6.2 6.2 0 1 1 42.2 3.6" stroke-width="2.4"/>
<rect x="94.2" y="0.6" width="18.6" height="13.8" rx="1.6" stroke-width="1.4"/>
<path d="M94.4 3.8 L103.5 10.6 L112.6 3.8" stroke-width="1.5"/>
</g>
<path d="M44.6 0.2 L44.7 6.2 L38.6 6.2 Z" fill="#9a9a9a"/>
<g fill="#9a9a9a"><path d="M59.6 4 L67.6 4 L67.6 7.9 L59.6 7.9 Z"/><path d="M62.4 7.5 L66.3 7.5 L66.9 14.7 L63.2 14.7 Z"/></g>
<path d="M67.4 4.4 L74.9 0.4 L74.9 11.6 L67.4 8.3" fill="#9a9a9a" fill-opacity="0" stroke="#9a9a9a" stroke-width="1.3"/>
<rect x="75.4" y="5.2" width="1.4" height="2.4" fill="#9a9a9a"/>
</svg>
<div class="t" style="left:718.0px;top:833.5px;font-size:13px;line-height:16px;color:#111">27</div>
<div class="t" style="left:741.5px;top:835.5px;font-size:13px;line-height:16px;color:#111">十三</div>
<div class="t" style="left:719.0px;top:860.8px;font-size:13px;line-height:16px;color:#111">1.&nbsp;任务1</div>
<svg style="left:905.0px;top:861.3px" width="10" height="10" viewBox="0 0 10 10"><path d="M8.2 2.2 A4 4 0 1 0 8.5 7.2" fill="none" stroke="#2a78c6" stroke-width="2"/><path d="M9.8 0 L9.8 4.6 L5.2 4.6Z" fill="#2a78c6"/></svg>
<div class="t" style="left:719.0px;top:879.8px;font-size:13px;line-height:16px;color:#111">2.&nbsp;任务2</div>
<div class="t" style="left:719.0px;top:898.8px;font-size:13px;line-height:16px;color:#111">3.&nbsp;任务3</div>
<div class="t" style="left:719.0px;top:917.8px;font-size:13px;line-height:16px;color:#111">4.&nbsp;任务4</div>
<div class="ln" style="left:713.0px;top:955.0px;width:210.5px;height:1px;background:#dcdcdc"></div>
<svg style="left:719.5px;top:961.0px" width="116" height="16" viewBox="0 0 116 16">
<g fill="none" stroke="#9a9a9a">
<circle cx="6.9" cy="7.4" r="6.4" stroke-width="1.9"/>
<path d="M3.6 6.9 L6.1 9.7 L10.2 5.6" stroke-width="2.6"/>
<path d="M41.8 11.4 A6.2 6.2 0 1 1 42.2 3.6" stroke-width="2.4"/>
<rect x="94.2" y="0.6" width="18.6" height="13.8" rx="1.6" stroke-width="1.4"/>
<path d="M94.4 3.8 L103.5 10.6 L112.6 3.8" stroke-width="1.5"/>
</g>
<path d="M44.6 0.2 L44.7 6.2 L38.6 6.2 Z" fill="#9a9a9a"/>
<g fill="#9a9a9a"><path d="M59.6 4 L67.6 4 L67.6 7.9 L59.6 7.9 Z"/><path d="M62.4 7.5 L66.3 7.5 L66.9 14.7 L63.2 14.7 Z"/></g>
<path d="M67.4 4.4 L74.9 0.4 L74.9 11.6 L67.4 8.3" fill="#9a9a9a" fill-opacity="0" stroke="#9a9a9a" stroke-width="1.3"/>
<rect x="75.4" y="5.2" width="1.4" height="2.4" fill="#9a9a9a"/>
</svg>
<div class="t" style="left:931.5px;top:833.5px;font-size:13px;line-height:16px;color:#111">28</div>
<div class="t" style="left:955.0px;top:835.5px;font-size:13px;line-height:16px;color:#111">十四</div>
<div class="t" style="left:932.5px;top:860.8px;font-size:13px;line-height:16px;color:#111">1.&nbsp;任务1</div>
<svg style="left:1119.1px;top:861.3px" width="10" height="10" viewBox="0 0 10 10"><path d="M8.2 2.2 A4 4 0 1 0 8.5 7.2" fill="none" stroke="#2a78c6" stroke-width="2"/><path d="M9.8 0 L9.8 4.6 L5.2 4.6Z" fill="#2a78c6"/></svg>
<div class="t" style="left:932.5px;top:879.8px;font-size:13px;line-height:16px;color:#111">2.&nbsp;任务2</div>
<div class="t" style="left:932.5px;top:898.8px;font-size:13px;line-height:16px;color:#111">3.&nbsp;任务3</div>
<div class="t" style="left:932.5px;top:917.8px;font-size:13px;line-height:16px;color:#111">4.&nbsp;任务4</div>
<div class="ln" style="left:926.5px;top:955.0px;width:211.1px;height:1px;background:#dcdcdc"></div>
<svg style="left:933.0px;top:961.0px" width="116" height="16" viewBox="0 0 116 16">
<g fill="none" stroke="#9a9a9a">
<circle cx="6.9" cy="7.4" r="6.4" stroke-width="1.9"/>
<path d="M3.6 6.9 L6.1 9.7 L10.2 5.6" stroke-width="2.6"/>
<path d="M41.8 11.4 A6.2 6.2 0 1 1 42.2 3.6" stroke-width="2.4"/>
<rect x="94.2" y="0.6" width="18.6" height="13.8" rx="1.6" stroke-width="1.4"/>
<path d="M94.4 3.8 L103.5 10.6 L112.6 3.8" stroke-width="1.5"/>
</g>
<path d="M44.6 0.2 L44.7 6.2 L38.6 6.2 Z" fill="#9a9a9a"/>
<g fill="#9a9a9a"><path d="M59.6 4 L67.6 4 L67.6 7.9 L59.6 7.9 Z"/><path d="M62.4 7.5 L66.3 7.5 L66.9 14.7 L63.2 14.7 Z"/></g>
<path d="M67.4 4.4 L74.9 0.4 L74.9 11.6 L67.4 8.3" fill="#9a9a9a" fill-opacity="0" stroke="#9a9a9a" stroke-width="1.3"/>
<rect x="75.4" y="5.2" width="1.4" height="2.4" fill="#9a9a9a"/>
</svg>
<div class="t" style="left:1145.6px;top:833.5px;font-size:13px;line-height:16px;color:#111">29</div>
<div class="t" style="left:1169.1px;top:835.5px;font-size:13px;line-height:16px;color:#111">中秋节</div>
<div class="ln" style="left:1140.6px;top:955.0px;width:210.9px;height:1px;background:#dcdcdc"></div>
<svg style="left:1147.1px;top:961.0px" width="116" height="16" viewBox="0 0 116 16">
<g fill="none" stroke="#9a9a9a">
<circle cx="6.9" cy="7.4" r="6.4" stroke-width="1.9"/>
<path d="M3.6 6.9 L6.1 9.7 L10.2 5.6" stroke-width="2.6"/>
<path d="M41.8 11.4 A6.2 6.2 0 1 1 42.2 3.6" stroke-width="2.4"/>
<rect x="94.2" y="0.6" width="18.6" height="13.8" rx="1.6" stroke-width="1.4"/>
<path d="M94.4 3.8 L103.5 10.6 L112.6 3.8" stroke-width="1.5"/>
</g>
<path d="M44.6 0.2 L44.7 6.2 L38.6 6.2 Z" fill="#9a9a9a"/>
<g fill="#9a9a9a"><path d="M59.6 4 L67.6 4 L67.6 7.9 L59.6 7.9 Z"/><path d="M62.4 7.5 L66.3 7.5 L66.9 14.7 L63.2 14.7 Z"/></g>
<path d="M67.4 4.4 L74.9 0.4 L74.9 11.6 L67.4 8.3" fill="#9a9a9a" fill-opacity="0" stroke="#9a9a9a" stroke-width="1.3"/>
<rect x="75.4" y="5.2" width="1.4" height="2.4" fill="#9a9a9a"/>
</svg>
<div class="t" style="left:1359.5px;top:833.5px;font-size:13px;line-height:16px;color:#111">30</div>
<div class="t" style="left:1383.0px;top:835.5px;font-size:13px;line-height:16px;color:#111">十六</div>
<div class="ln" style="left:1354.5px;top:955.0px;width:210.5px;height:1px;background:#dcdcdc"></div>
<svg style="left:1361.0px;top:961.0px" width="116" height="16" viewBox="0 0 116 16">
<g fill="none" stroke="#9a9a9a">
<circle cx="6.9" cy="7.4" r="6.4" stroke-width="1.9"/>
<path d="M3.6 6.9 L6.1 9.7 L10.2 5.6" stroke-width="2.6"/>
<path d="M41.8 11.4 A6.2 6.2 0 1 1 42.2 3.6" stroke-width="2.4"/>
<rect x="94.2" y="0.6" width="18.6" height="13.8" rx="1.6" stroke-width="1.4"/>
<path d="M94.4 3.8 L103.5 10.6 L112.6 3.8" stroke-width="1.5"/>
</g>
<path d="M44.6 0.2 L44.7 6.2 L38.6 6.2 Z" fill="#9a9a9a"/>
<g fill="#9a9a9a"><path d="M59.6 4 L67.6 4 L67.6 7.9 L59.6 7.9 Z"/><path d="M62.4 7.5 L66.3 7.5 L66.9 14.7 L63.2 14.7 Z"/></g>
<path d="M67.4 4.4 L74.9 0.4 L74.9 11.6 L67.4 8.3" fill="#9a9a9a" fill-opacity="0" stroke="#9a9a9a" stroke-width="1.3"/>
<rect x="75.4" y="5.2" width="1.4" height="2.4" fill="#9a9a9a"/>
</svg>
</body></html>
